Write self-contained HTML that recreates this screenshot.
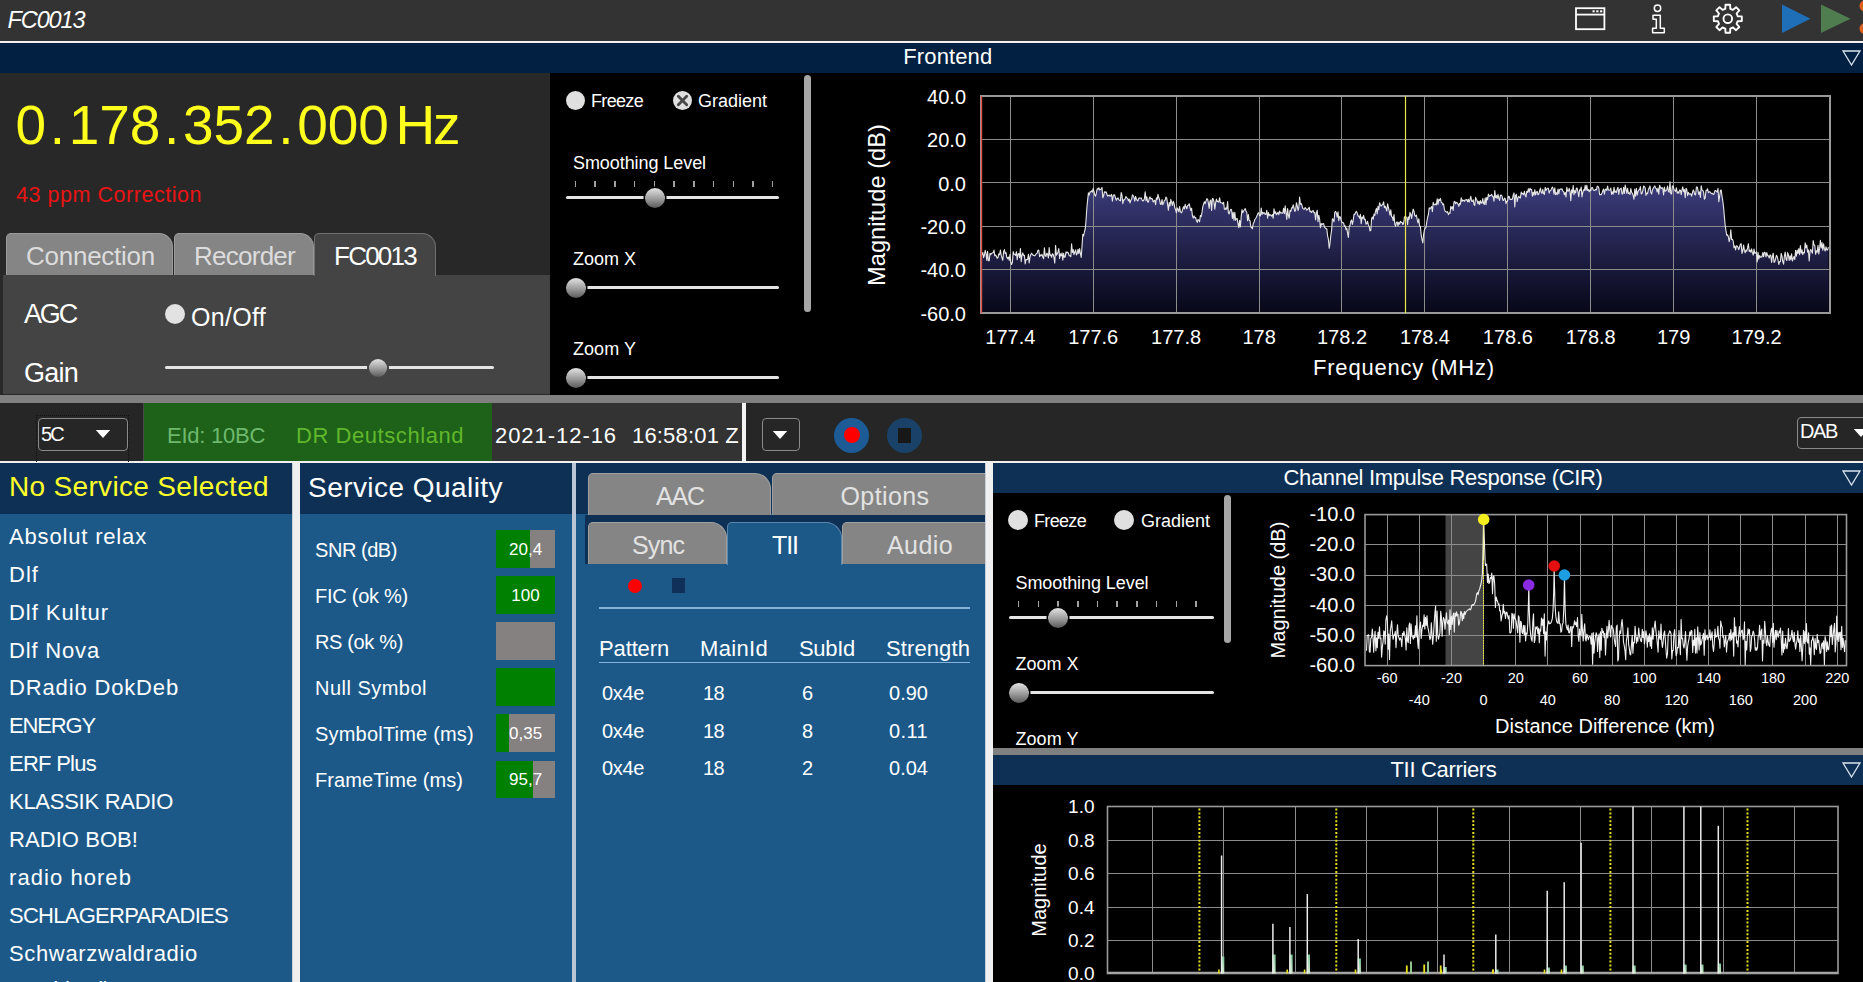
<!DOCTYPE html>
<html><head><meta charset="utf-8"><title>FC0013</title>
<style>
html,body{margin:0;padding:0;background:#000;}
body{width:1863px;height:982px;position:relative;overflow:hidden;font-family:"Liberation Sans",sans-serif;}
#r{position:absolute;left:0;top:0;width:1863px;height:982px;overflow:hidden;background:#000;}
#r div,#r span,#r svg{position:absolute;}
#r span{white-space:pre;}
#r i{font-style:normal;padding:0 3.6px;}
</style></head><body><div id="r">
<div style="left:0px;top:0px;width:1863px;height:41px;background:#333333;"></div>
<div style="left:0px;top:41px;width:1863px;height:2px;background:#f2f2f2;"></div>
<span style="left:7.5px;top:5.1px;font-size:23.5px;line-height:31px;color:#fff;letter-spacing:-1.10px;font-style:italic;">FC0013</span>
<div style="left:0px;top:43px;width:1863px;height:30px;background:#022041;"></div>
<span style="left:903.3px;top:42.4px;font-size:22px;line-height:29px;color:#fff;letter-spacing:0.12px;">Frontend</span>
<div style="left:0px;top:73px;width:550px;height:322px;background:#282828;"></div>
<span style="left:15.6px;top:89px;font-size:55px;line-height:72px;color:#ffff1e;">0<i>.</i>178<i>.</i>352<i>.</i>000</span>
<span style="left:395.5px;top:89.3px;font-size:55px;line-height:72px;color:#ffff1e;letter-spacing:-2.11px;">Hz</span>
<span style="left:16.0px;top:180.5px;font-size:21.5px;line-height:28px;color:#e81414;letter-spacing:0.54px;">43 ppm Correction</span>
<div style="left:6px;top:233px;width:167px;height:42px;background:#858585;border:1px solid #9a9a9a;border-bottom:none;box-sizing:border-box;border-radius:5px 14px 0 0;"></div>
<div style="left:174px;top:233px;width:140px;height:42px;background:#858585;border:1px solid #9a9a9a;border-bottom:none;box-sizing:border-box;border-radius:5px 14px 0 0;"></div>
<div style="left:3px;top:275px;width:547px;height:119px;background:#444444;"></div>
<div style="left:314px;top:233px;width:122px;height:43px;background:#444444;border:1px solid #707070;border-bottom:none;box-sizing:border-box;border-radius:5px 14px 0 0;"></div>
<span style="left:26.0px;top:239.3px;font-size:26px;line-height:34px;color:#dcdcdc;letter-spacing:-0.25px;">Connection</span>
<span style="left:194.0px;top:239.3px;font-size:26px;line-height:34px;color:#dcdcdc;letter-spacing:-0.74px;">Recorder</span>
<span style="left:334.0px;top:239.3px;font-size:26px;line-height:34px;color:#fff;letter-spacing:-1.75px;">FC0013</span>
<span style="left:24.0px;top:296.8px;font-size:27px;line-height:35px;color:#fff;letter-spacing:-2.17px;">AGC</span>
<span style="left:24.0px;top:356.3px;font-size:27px;line-height:35px;color:#fff;letter-spacing:-0.76px;">Gain</span>
<div style="left:165px;top:304px;width:20px;height:20px;border-radius:50%;background:#e2e2e2;"></div>
<span style="left:191.0px;top:301.3px;font-size:25px;line-height:32px;color:#fff;letter-spacing:0.30px;">On/Off</span>
<div style="left:165px;top:365.5px;width:329px;height:3px;background:#e4e4e4;border-radius:2px;"></div>
<div style="left:368.5px;top:358.5px;width:18px;height:18px;border-radius:50%;background:linear-gradient(180deg,#e2e2e2 0%,#c6c6c6 22%,#9a9a9a 55%,#5a5a5a 100%);box-shadow:0 0 0 2px #444;"></div>
<div style="left:0px;top:395px;width:1863px;height:8px;background:#808080;"></div>
<div style="left:566.0px;top:91.0px;width:19px;height:19px;border-radius:50%;background:#e0e0e0;"></div>
<span style="left:591.0px;top:90.2px;font-size:18px;line-height:23px;color:#fff;letter-spacing:-0.67px;">Freeze</span>
<div style="left:672.5px;top:91.0px;width:19px;height:19px;border-radius:50%;background:#e0e0e0;"></div>
<svg style="left:672.5px;top:91.0px" width="19" height="19" viewBox="0 0 20 20"><path d="M5.6 5.6 L14.4 14.4 M14.4 5.6 L5.6 14.4" stroke="#484848" stroke-width="3" stroke-linecap="round" fill="none"/></svg>
<span style="left:698.0px;top:90.2px;font-size:18px;line-height:23px;color:#fff;">Gradient</span>
<span style="left:573.0px;top:151.7px;font-size:18px;line-height:23px;color:#fff;letter-spacing:-0.07px;">Smoothing Level</span>
<div style="left:574.75px;top:181.3px;width:1.5px;height:5.699999999999989px;background:#a2a2a2;"></div>
<div style="left:594.47px;top:181.3px;width:1.5px;height:5.699999999999989px;background:#a2a2a2;"></div>
<div style="left:614.19px;top:181.3px;width:1.5px;height:5.699999999999989px;background:#a2a2a2;"></div>
<div style="left:633.91px;top:181.3px;width:1.5px;height:5.699999999999989px;background:#a2a2a2;"></div>
<div style="left:653.63px;top:181.3px;width:1.5px;height:5.699999999999989px;background:#a2a2a2;"></div>
<div style="left:673.35px;top:181.3px;width:1.5px;height:5.699999999999989px;background:#a2a2a2;"></div>
<div style="left:693.07px;top:181.3px;width:1.5px;height:5.699999999999989px;background:#a2a2a2;"></div>
<div style="left:712.79px;top:181.3px;width:1.5px;height:5.699999999999989px;background:#a2a2a2;"></div>
<div style="left:732.51px;top:181.3px;width:1.5px;height:5.699999999999989px;background:#a2a2a2;"></div>
<div style="left:752.23px;top:181.3px;width:1.5px;height:5.699999999999989px;background:#a2a2a2;"></div>
<div style="left:771.95px;top:181.3px;width:1.5px;height:5.699999999999989px;background:#a2a2a2;"></div>
<div style="left:566px;top:195.5px;width:213px;height:3px;background:#e4e4e4;border-radius:2px;"></div>
<div style="left:644.5px;top:187.5px;width:20px;height:20px;border-radius:50%;background:linear-gradient(180deg,#e2e2e2 0%,#c6c6c6 22%,#9a9a9a 55%,#5a5a5a 100%);box-shadow:0 0 0 1.5px #000;"></div>
<span style="left:573.0px;top:247.7px;font-size:18px;line-height:23px;color:#fff;">Zoom X</span>
<div style="left:566px;top:286.0px;width:213px;height:3px;background:#e4e4e4;border-radius:2px;"></div>
<div style="left:566.1px;top:278.0px;width:20px;height:20px;border-radius:50%;background:linear-gradient(180deg,#e2e2e2 0%,#c6c6c6 22%,#9a9a9a 55%,#5a5a5a 100%);box-shadow:0 0 0 1.5px #000;"></div>
<span style="left:573.0px;top:337.7px;font-size:18px;line-height:23px;color:#fff;letter-spacing:0.05px;">Zoom Y</span>
<div style="left:566px;top:376.0px;width:213px;height:3px;background:#e4e4e4;border-radius:2px;"></div>
<div style="left:566.1px;top:368.0px;width:20px;height:20px;border-radius:50%;background:linear-gradient(180deg,#e2e2e2 0%,#c6c6c6 22%,#9a9a9a 55%,#5a5a5a 100%);box-shadow:0 0 0 1.5px #000;"></div>
<div style="left:804px;top:75px;width:7px;height:237px;border-radius:4px;background:#a6a6a6;"></div>
<svg style="left:0;top:72px" width="1863" height="322" viewBox="0 72 1863 322"><defs><linearGradient id="sg" gradientUnits="userSpaceOnUse" x1="0" y1="96" x2="0" y2="313"><stop offset="0" stop-color="#5c5cb4"/><stop offset="0.43" stop-color="#3a3a78"/><stop offset="1" stop-color="#070718"/></linearGradient></defs><rect x="981" y="96" width="849" height="217" fill="#000"/><polygon points="982,313 982.0,255.1 982.8,252.3 983.6,257.6 984.4,255.0 985.2,250.4 986.0,253.4 986.8,260.5 987.6,251.2 988.4,260.6 989.2,260.8 990.0,253.3 990.8,254.6 991.6,253.3 992.4,253.0 993.2,252.5 994.0,250.1 994.8,255.9 995.6,255.0 996.4,256.3 997.2,258.2 998.0,257.7 998.8,253.8 999.6,254.6 1000.4,250.0 1001.2,255.2 1002.0,257.9 1002.8,260.3 1003.6,251.8 1004.4,249.6 1005.2,253.6 1006.0,252.7 1006.8,257.3 1007.6,258.6 1008.4,257.0 1009.2,260.5 1010.0,254.2 1010.8,262.2 1011.6,264.5 1012.4,262.3 1013.2,251.6 1014.0,254.3 1014.8,254.4 1015.6,255.3 1016.4,251.7 1017.2,259.8 1018.0,253.9 1018.8,253.5 1019.6,257.7 1020.4,248.5 1021.2,261.7 1022.0,255.2 1022.8,252.9 1023.6,255.6 1024.4,255.3 1025.2,264.0 1026.0,259.4 1026.8,259.8 1027.6,259.4 1028.4,254.3 1029.2,263.0 1030.0,257.0 1030.8,254.5 1031.6,253.2 1032.4,254.4 1033.2,255.4 1034.0,255.4 1034.8,255.9 1035.6,254.7 1036.4,253.6 1037.2,253.0 1038.0,250.1 1038.8,250.2 1039.6,256.7 1040.4,255.0 1041.2,255.7 1042.0,254.3 1042.8,257.1 1043.6,258.8 1044.4,247.7 1045.2,255.9 1046.0,256.4 1046.8,253.2 1047.6,254.2 1048.4,258.0 1049.2,247.5 1050.0,255.4 1050.8,254.8 1051.6,257.3 1052.4,253.7 1053.2,254.4 1054.0,257.8 1054.8,263.1 1055.6,245.3 1056.4,255.1 1057.2,254.0 1058.0,251.9 1058.8,248.6 1059.6,258.4 1060.4,253.8 1061.2,255.7 1062.0,252.9 1062.8,260.1 1063.6,253.3 1064.4,257.3 1065.2,257.0 1066.0,251.7 1066.8,253.0 1067.6,252.2 1068.4,253.1 1069.2,255.8 1070.0,255.7 1070.8,256.6 1071.6,243.8 1072.4,252.5 1073.2,249.6 1074.0,254.6 1074.8,252.2 1075.6,249.9 1076.4,254.9 1077.2,253.7 1078.0,249.2 1078.8,253.7 1079.6,248.5 1080.4,253.7 1081.2,257.5 1082.0,246.4 1082.8,234.2 1083.6,236.0 1084.4,232.0 1085.2,229.0 1086.0,220.7 1086.8,208.5 1087.6,200.4 1088.4,192.9 1089.2,195.1 1090.0,191.9 1090.8,191.9 1091.6,190.8 1092.4,192.1 1093.2,188.3 1094.0,191.3 1094.8,195.1 1095.6,196.2 1096.4,192.9 1097.2,188.7 1098.0,189.1 1098.8,187.8 1099.6,190.0 1100.4,189.6 1101.2,188.8 1102.0,187.4 1102.8,197.8 1103.6,195.8 1104.4,191.8 1105.2,192.4 1106.0,191.8 1106.8,193.8 1107.6,196.2 1108.4,195.5 1109.2,195.0 1110.0,196.3 1110.8,195.6 1111.6,194.4 1112.4,201.1 1113.2,196.1 1114.0,194.7 1114.8,195.3 1115.6,198.3 1116.4,200.3 1117.2,198.5 1118.0,197.9 1118.8,199.6 1119.6,200.3 1120.4,200.9 1121.2,192.5 1122.0,195.3 1122.8,203.6 1123.6,199.9 1124.4,200.0 1125.2,198.5 1126.0,196.5 1126.8,197.9 1127.6,198.4 1128.4,200.9 1129.2,199.0 1130.0,203.0 1130.8,200.4 1131.6,199.3 1132.4,194.8 1133.2,195.6 1134.0,197.4 1134.8,201.1 1135.6,196.3 1136.4,199.1 1137.2,200.6 1138.0,200.9 1138.8,198.1 1139.6,198.1 1140.4,198.3 1141.2,197.9 1142.0,200.0 1142.8,200.9 1143.6,200.5 1144.4,198.6 1145.2,191.9 1146.0,200.7 1146.8,196.7 1147.6,202.0 1148.4,202.2 1149.2,198.5 1150.0,196.9 1150.8,199.0 1151.6,198.5 1152.4,199.0 1153.2,202.0 1154.0,200.9 1154.8,200.3 1155.6,204.6 1156.4,197.7 1157.2,199.4 1158.0,194.3 1158.8,197.8 1159.6,199.8 1160.4,204.2 1161.2,204.4 1162.0,199.6 1162.8,204.7 1163.6,203.0 1164.4,200.4 1165.2,200.1 1166.0,197.0 1166.8,198.3 1167.6,204.6 1168.4,210.2 1169.2,202.5 1170.0,206.0 1170.8,199.4 1171.6,202.4 1172.4,205.4 1173.2,201.3 1174.0,203.3 1174.8,207.6 1175.6,209.7 1176.4,212.8 1177.2,207.9 1178.0,209.3 1178.8,211.8 1179.6,206.5 1180.4,211.5 1181.2,212.8 1182.0,211.8 1182.8,208.8 1183.6,206.7 1184.4,208.9 1185.2,204.4 1186.0,206.8 1186.8,208.8 1187.6,205.7 1188.4,205.2 1189.2,203.8 1190.0,207.3 1190.8,210.5 1191.6,208.3 1192.4,215.7 1193.2,218.2 1194.0,215.8 1194.8,217.7 1195.6,217.4 1196.4,220.5 1197.2,222.4 1198.0,219.5 1198.8,220.3 1199.6,221.8 1200.4,215.3 1201.2,216.7 1202.0,212.5 1202.8,206.6 1203.6,204.1 1204.4,201.8 1205.2,203.7 1206.0,201.1 1206.8,198.8 1207.6,199.0 1208.4,203.1 1209.2,208.4 1210.0,201.1 1210.8,200.0 1211.6,210.4 1212.4,198.6 1213.2,198.8 1214.0,201.9 1214.8,209.1 1215.6,203.1 1216.4,199.0 1217.2,201.6 1218.0,201.3 1218.8,202.1 1219.6,197.7 1220.4,202.7 1221.2,202.8 1222.0,202.8 1222.8,203.9 1223.6,202.2 1224.4,209.2 1225.2,209.4 1226.0,207.8 1226.8,209.2 1227.6,201.6 1228.4,212.9 1229.2,213.9 1230.0,210.9 1230.8,209.2 1231.6,209.9 1232.4,218.4 1233.2,212.4 1234.0,220.3 1234.8,212.3 1235.6,220.1 1236.4,218.8 1237.2,218.5 1238.0,223.4 1238.8,227.6 1239.6,220.2 1240.4,226.9 1241.2,216.6 1242.0,209.6 1242.8,212.6 1243.6,210.9 1244.4,210.0 1245.2,208.5 1246.0,211.0 1246.8,212.5 1247.6,220.7 1248.4,214.6 1249.2,220.5 1250.0,220.5 1250.8,227.0 1251.6,227.5 1252.4,228.8 1253.2,223.7 1254.0,222.3 1254.8,219.5 1255.6,218.6 1256.4,217.2 1257.2,215.2 1258.0,213.1 1258.8,212.6 1259.6,215.6 1260.4,216.0 1261.2,208.1 1262.0,214.5 1262.8,212.3 1263.6,213.4 1264.4,212.8 1265.2,214.4 1266.0,214.2 1266.8,210.3 1267.6,218.1 1268.4,212.5 1269.2,215.6 1270.0,214.6 1270.8,215.2 1271.6,216.1 1272.4,214.4 1273.2,218.3 1274.0,208.8 1274.8,213.5 1275.6,211.7 1276.4,214.8 1277.2,213.6 1278.0,212.4 1278.8,214.7 1279.6,211.0 1280.4,213.0 1281.2,212.7 1282.0,213.0 1282.8,213.2 1283.6,208.4 1284.4,213.6 1285.2,205.8 1286.0,212.8 1286.8,219.4 1287.6,208.6 1288.4,215.3 1289.2,218.3 1290.0,210.4 1290.8,211.3 1291.6,207.8 1292.4,208.0 1293.2,204.8 1294.0,208.0 1294.8,211.5 1295.6,210.1 1296.4,202.7 1297.2,205.6 1298.0,210.5 1298.8,207.7 1299.6,197.0 1300.4,204.3 1301.2,203.5 1302.0,205.8 1302.8,208.4 1303.6,209.0 1304.4,209.3 1305.2,207.6 1306.0,208.6 1306.8,210.2 1307.6,209.3 1308.4,208.7 1309.2,207.2 1310.0,211.8 1310.8,211.2 1311.6,212.5 1312.4,211.1 1313.2,210.5 1314.0,212.9 1314.8,212.5 1315.6,220.0 1316.4,213.2 1317.2,210.2 1318.0,221.8 1318.8,215.2 1319.6,219.0 1320.4,227.6 1321.2,223.6 1322.0,224.6 1322.8,223.7 1323.6,223.6 1324.4,226.9 1325.2,227.9 1326.0,228.7 1326.8,228.9 1327.6,235.8 1328.4,239.4 1329.2,248.2 1330.0,243.4 1330.8,235.5 1331.6,230.1 1332.4,218.7 1333.2,219.6 1334.0,221.7 1334.8,212.3 1335.6,211.5 1336.4,213.1 1337.2,217.2 1338.0,211.8 1338.8,220.7 1339.6,216.5 1340.4,217.3 1341.2,220.3 1342.0,222.6 1342.8,222.5 1343.6,222.9 1344.4,226.4 1345.2,225.8 1346.0,229.7 1346.8,228.1 1347.6,233.4 1348.4,237.5 1349.2,226.7 1350.0,225.4 1350.8,221.3 1351.6,219.9 1352.4,224.4 1353.2,220.4 1354.0,214.2 1354.8,214.5 1355.6,212.3 1356.4,211.4 1357.2,212.8 1358.0,215.9 1358.8,216.1 1359.6,218.2 1360.4,214.3 1361.2,223.8 1362.0,217.0 1362.8,218.6 1363.6,215.4 1364.4,219.7 1365.2,219.2 1366.0,224.1 1366.8,223.5 1367.6,221.3 1368.4,225.1 1369.2,226.5 1370.0,230.9 1370.8,230.4 1371.6,218.8 1372.4,216.9 1373.2,219.3 1374.0,214.0 1374.8,215.4 1375.6,211.2 1376.4,208.3 1377.2,213.9 1378.0,206.3 1378.8,209.6 1379.6,202.7 1380.4,204.8 1381.2,206.1 1382.0,205.0 1382.8,204.5 1383.6,201.8 1384.4,207.7 1385.2,206.2 1386.0,208.3 1386.8,211.0 1387.6,203.7 1388.4,207.5 1389.2,210.8 1390.0,215.2 1390.8,209.9 1391.6,216.7 1392.4,217.1 1393.2,220.7 1394.0,214.5 1394.8,224.4 1395.6,226.3 1396.4,222.2 1397.2,221.9 1398.0,225.9 1398.8,222.4 1399.6,224.1 1400.4,221.2 1401.2,222.5 1402.0,222.2 1402.8,224.6 1403.6,223.3 1404.4,217.4 1405.2,216.2 1406.0,217.0 1406.8,217.3 1407.6,224.8 1408.4,216.9 1409.2,219.2 1410.0,212.4 1410.8,214.4 1411.6,218.4 1412.4,213.2 1413.2,209.1 1414.0,211.2 1414.8,215.7 1415.6,216.2 1416.4,215.2 1417.2,219.4 1418.0,222.9 1418.8,218.8 1419.6,226.2 1420.4,226.4 1421.2,235.2 1422.0,239.3 1422.8,242.9 1423.6,234.7 1424.4,229.9 1425.2,228.4 1426.0,227.4 1426.8,221.7 1427.6,217.5 1428.4,214.5 1429.2,207.8 1430.0,208.9 1430.8,207.7 1431.6,206.5 1432.4,211.7 1433.2,202.3 1434.0,204.7 1434.8,204.8 1435.6,203.9 1436.4,204.9 1437.2,198.9 1438.0,204.5 1438.8,199.3 1439.6,200.6 1440.4,198.4 1441.2,202.2 1442.0,202.6 1442.8,204.7 1443.6,203.9 1444.4,209.4 1445.2,211.2 1446.0,211.7 1446.8,212.4 1447.6,211.7 1448.4,214.6 1449.2,213.1 1450.0,213.3 1450.8,206.3 1451.6,208.8 1452.4,206.7 1453.2,210.4 1454.0,201.8 1454.8,201.4 1455.6,203.7 1456.4,202.4 1457.2,202.7 1458.0,204.1 1458.8,206.4 1459.6,203.3 1460.4,204.3 1461.2,197.7 1462.0,201.4 1462.8,200.1 1463.6,200.4 1464.4,201.3 1465.2,199.7 1466.0,200.0 1466.8,199.6 1467.6,201.8 1468.4,199.2 1469.2,202.1 1470.0,199.4 1470.8,196.3 1471.6,201.2 1472.4,201.4 1473.2,199.8 1474.0,204.5 1474.8,205.3 1475.6,197.4 1476.4,199.2 1477.2,200.8 1478.0,203.8 1478.8,201.2 1479.6,204.5 1480.4,200.6 1481.2,203.0 1482.0,203.2 1482.8,198.6 1483.6,203.7 1484.4,204.3 1485.2,197.8 1486.0,204.7 1486.8,197.4 1487.6,199.7 1488.4,194.0 1489.2,196.4 1490.0,195.5 1490.8,195.5 1491.6,194.3 1492.4,196.2 1493.2,196.8 1494.0,201.3 1494.8,190.6 1495.6,197.7 1496.4,195.6 1497.2,198.5 1498.0,194.3 1498.8,198.2 1499.6,200.4 1500.4,195.3 1501.2,195.1 1502.0,195.8 1502.8,200.0 1503.6,200.5 1504.4,198.1 1505.2,198.6 1506.0,203.6 1506.8,201.1 1507.6,201.2 1508.4,196.3 1509.2,196.6 1510.0,199.4 1510.8,199.2 1511.6,199.4 1512.4,199.0 1513.2,195.2 1514.0,192.9 1514.8,207.0 1515.6,195.4 1516.4,194.3 1517.2,201.6 1518.0,198.0 1518.8,196.2 1519.6,197.6 1520.4,198.0 1521.2,192.0 1522.0,194.1 1522.8,193.3 1523.6,194.7 1524.4,191.3 1525.2,195.2 1526.0,196.9 1526.8,191.2 1527.6,192.4 1528.4,188.7 1529.2,192.1 1530.0,188.2 1530.8,189.7 1531.6,189.5 1532.4,196.3 1533.2,192.2 1534.0,195.1 1534.8,189.7 1535.6,194.9 1536.4,192.2 1537.2,191.4 1538.0,194.8 1538.8,194.0 1539.6,191.0 1540.4,188.1 1541.2,192.3 1542.0,193.4 1542.8,189.4 1543.6,193.7 1544.4,194.4 1545.2,187.4 1546.0,190.4 1546.8,188.9 1547.6,188.2 1548.4,188.3 1549.2,193.2 1550.0,190.7 1550.8,190.4 1551.6,188.5 1552.4,187.0 1553.2,188.9 1554.0,194.1 1554.8,187.9 1555.6,194.6 1556.4,192.8 1557.2,194.7 1558.0,189.0 1558.8,193.8 1559.6,189.4 1560.4,189.0 1561.2,189.4 1562.0,188.8 1562.8,191.1 1563.6,191.4 1564.4,194.8 1565.2,192.5 1566.0,196.9 1566.8,187.4 1567.6,191.2 1568.4,191.1 1569.2,188.3 1570.0,191.5 1570.8,200.8 1571.6,189.7 1572.4,193.0 1573.2,185.5 1574.0,194.6 1574.8,190.6 1575.6,192.9 1576.4,188.1 1577.2,188.3 1578.0,192.0 1578.8,196.8 1579.6,189.7 1580.4,190.4 1581.2,187.1 1582.0,196.9 1582.8,192.5 1583.6,189.7 1584.4,190.3 1585.2,185.4 1586.0,190.4 1586.8,185.4 1587.6,190.4 1588.4,189.6 1589.2,191.7 1590.0,189.7 1590.8,190.7 1591.6,187.7 1592.4,187.5 1593.2,189.7 1594.0,190.5 1594.8,190.4 1595.6,189.4 1596.4,189.9 1597.2,186.2 1598.0,186.4 1598.8,187.9 1599.6,194.6 1600.4,194.6 1601.2,194.8 1602.0,193.0 1602.8,190.7 1603.6,189.1 1604.4,194.1 1605.2,189.6 1606.0,189.0 1606.8,190.5 1607.6,186.1 1608.4,190.0 1609.2,190.2 1610.0,189.9 1610.8,188.1 1611.6,194.4 1612.4,191.8 1613.2,194.1 1614.0,187.2 1614.8,192.4 1615.6,191.1 1616.4,192.6 1617.2,189.0 1618.0,187.2 1618.8,194.4 1619.6,189.5 1620.4,189.1 1621.2,188.2 1622.0,193.9 1622.8,194.0 1623.6,187.4 1624.4,193.5 1625.2,185.0 1626.0,189.0 1626.8,193.5 1627.6,188.4 1628.4,193.5 1629.2,192.9 1630.0,194.4 1630.8,188.6 1631.6,192.3 1632.4,193.4 1633.2,195.6 1634.0,199.3 1634.8,189.1 1635.6,196.2 1636.4,188.2 1637.2,195.0 1638.0,191.7 1638.8,190.0 1639.6,189.5 1640.4,186.6 1641.2,194.0 1642.0,193.3 1642.8,190.8 1643.6,186.1 1644.4,186.4 1645.2,187.9 1646.0,195.4 1646.8,193.0 1647.6,193.7 1648.4,189.4 1649.2,188.1 1650.0,185.9 1650.8,192.3 1651.6,194.1 1652.4,190.2 1653.2,188.3 1654.0,187.0 1654.8,185.9 1655.6,188.1 1656.4,188.6 1657.2,192.0 1658.0,188.1 1658.8,194.2 1659.6,185.2 1660.4,187.3 1661.2,188.6 1662.0,187.6 1662.8,188.1 1663.6,195.0 1664.4,187.1 1665.2,191.3 1666.0,190.8 1666.8,189.5 1667.6,186.1 1668.4,191.1 1669.2,192.3 1670.0,181.9 1670.8,193.7 1671.6,194.0 1672.4,185.9 1673.2,186.3 1674.0,189.6 1674.8,190.3 1675.6,191.4 1676.4,187.7 1677.2,193.2 1678.0,191.8 1678.8,193.3 1679.6,190.0 1680.4,190.2 1681.2,194.7 1682.0,189.6 1682.8,186.9 1683.6,191.7 1684.4,189.5 1685.2,197.6 1686.0,188.2 1686.8,189.7 1687.6,195.6 1688.4,192.4 1689.2,194.1 1690.0,194.1 1690.8,193.7 1691.6,196.2 1692.4,193.1 1693.2,189.9 1694.0,191.3 1694.8,194.6 1695.6,194.9 1696.4,187.1 1697.2,187.0 1698.0,190.3 1698.8,194.4 1699.6,191.8 1700.4,197.5 1701.2,185.7 1702.0,190.1 1702.8,190.6 1703.6,192.1 1704.4,199.2 1705.2,197.9 1706.0,190.3 1706.8,190.4 1707.6,188.8 1708.4,192.7 1709.2,191.9 1710.0,191.7 1710.8,193.0 1711.6,193.7 1712.4,193.3 1713.2,194.5 1714.0,194.0 1714.8,191.0 1715.6,190.3 1716.4,191.4 1717.2,192.2 1718.0,188.3 1718.8,201.7 1719.6,196.7 1720.4,190.5 1721.2,190.0 1722.0,196.1 1722.8,200.8 1723.6,207.6 1724.4,216.9 1725.2,225.8 1726.0,230.9 1726.8,235.4 1727.6,234.8 1728.4,237.0 1729.2,241.6 1730.0,238.2 1730.8,229.9 1731.6,239.4 1732.4,239.3 1733.2,241.1 1734.0,247.6 1734.8,245.9 1735.6,250.0 1736.4,245.9 1737.2,246.0 1738.0,247.5 1738.8,249.7 1739.6,247.0 1740.4,244.1 1741.2,243.9 1742.0,253.4 1742.8,250.9 1743.6,245.1 1744.4,250.2 1745.2,252.8 1746.0,250.0 1746.8,251.1 1747.6,247.7 1748.4,243.7 1749.2,251.4 1750.0,250.2 1750.8,252.2 1751.6,248.9 1752.4,252.9 1753.2,255.1 1754.0,249.0 1754.8,253.4 1755.6,253.0 1756.4,251.8 1757.2,262.0 1758.0,252.2 1758.8,259.1 1759.6,255.6 1760.4,257.2 1761.2,256.8 1762.0,257.0 1762.8,252.5 1763.6,256.6 1764.4,252.3 1765.2,252.8 1766.0,256.9 1766.8,252.6 1767.6,255.6 1768.4,255.8 1769.2,258.1 1770.0,255.0 1770.8,255.3 1771.6,262.5 1772.4,256.7 1773.2,253.2 1774.0,262.1 1774.8,261.9 1775.6,258.7 1776.4,255.4 1777.2,256.6 1778.0,260.0 1778.8,264.5 1779.6,261.6 1780.4,261.6 1781.2,253.4 1782.0,256.5 1782.8,261.8 1783.6,264.2 1784.4,256.0 1785.2,252.1 1786.0,259.2 1786.8,260.6 1787.6,252.6 1788.4,254.8 1789.2,260.4 1790.0,255.8 1790.8,259.9 1791.6,253.7 1792.4,261.0 1793.2,258.4 1794.0,256.5 1794.8,259.6 1795.6,250.4 1796.4,256.2 1797.2,250.1 1798.0,253.5 1798.8,248.6 1799.6,254.6 1800.4,245.6 1801.2,253.3 1802.0,249.9 1802.8,254.7 1803.6,252.2 1804.4,252.8 1805.2,242.9 1806.0,247.8 1806.8,245.1 1807.6,252.3 1808.4,249.9 1809.2,260.9 1810.0,251.2 1810.8,249.4 1811.6,251.3 1812.4,253.2 1813.2,240.5 1814.0,244.8 1814.8,245.5 1815.6,254.3 1816.4,250.9 1817.2,252.2 1818.0,245.4 1818.8,253.9 1819.6,248.4 1820.4,240.2 1821.2,247.9 1822.0,242.5 1822.8,250.3 1823.6,243.8 1824.4,249.2 1825.2,251.0 1826.0,246.8 1826.8,249.9 1827.6,250.0 1828.4,247.1 1829,313" fill="url(#sg)" /><line x1="981" y1="96.5" x2="1830" y2="96.5" stroke="#8c8c8c" stroke-width="1"/><line x1="981" y1="139.5" x2="1830" y2="139.5" stroke="#8c8c8c" stroke-width="1"/><line x1="981" y1="182.5" x2="1830" y2="182.5" stroke="#8c8c8c" stroke-width="1"/><line x1="981" y1="226.5" x2="1830" y2="226.5" stroke="#8c8c8c" stroke-width="1"/><line x1="981" y1="269.5" x2="1830" y2="269.5" stroke="#8c8c8c" stroke-width="1"/><line x1="981" y1="313.5" x2="1830" y2="313.5" stroke="#8c8c8c" stroke-width="1"/><line x1="1010.5" y1="96" x2="1010.5" y2="313" stroke="#8c8c8c" stroke-width="1"/><line x1="1093.5" y1="96" x2="1093.5" y2="313" stroke="#8c8c8c" stroke-width="1"/><line x1="1176.5" y1="96" x2="1176.5" y2="313" stroke="#8c8c8c" stroke-width="1"/><line x1="1259.5" y1="96" x2="1259.5" y2="313" stroke="#8c8c8c" stroke-width="1"/><line x1="1341.5" y1="96" x2="1341.5" y2="313" stroke="#8c8c8c" stroke-width="1"/><line x1="1424.5" y1="96" x2="1424.5" y2="313" stroke="#8c8c8c" stroke-width="1"/><line x1="1507.5" y1="96" x2="1507.5" y2="313" stroke="#8c8c8c" stroke-width="1"/><line x1="1590.5" y1="96" x2="1590.5" y2="313" stroke="#8c8c8c" stroke-width="1"/><line x1="1673.5" y1="96" x2="1673.5" y2="313" stroke="#8c8c8c" stroke-width="1"/><line x1="1756.5" y1="96" x2="1756.5" y2="313" stroke="#8c8c8c" stroke-width="1"/><rect x="981" y="96" width="849" height="217" fill="none" stroke="#9a9a9a" stroke-width="2"/><polyline points="982.0,255.1 982.8,252.3 983.6,257.6 984.4,255.0 985.2,250.4 986.0,253.4 986.8,260.5 987.6,251.2 988.4,260.6 989.2,260.8 990.0,253.3 990.8,254.6 991.6,253.3 992.4,253.0 993.2,252.5 994.0,250.1 994.8,255.9 995.6,255.0 996.4,256.3 997.2,258.2 998.0,257.7 998.8,253.8 999.6,254.6 1000.4,250.0 1001.2,255.2 1002.0,257.9 1002.8,260.3 1003.6,251.8 1004.4,249.6 1005.2,253.6 1006.0,252.7 1006.8,257.3 1007.6,258.6 1008.4,257.0 1009.2,260.5 1010.0,254.2 1010.8,262.2 1011.6,264.5 1012.4,262.3 1013.2,251.6 1014.0,254.3 1014.8,254.4 1015.6,255.3 1016.4,251.7 1017.2,259.8 1018.0,253.9 1018.8,253.5 1019.6,257.7 1020.4,248.5 1021.2,261.7 1022.0,255.2 1022.8,252.9 1023.6,255.6 1024.4,255.3 1025.2,264.0 1026.0,259.4 1026.8,259.8 1027.6,259.4 1028.4,254.3 1029.2,263.0 1030.0,257.0 1030.8,254.5 1031.6,253.2 1032.4,254.4 1033.2,255.4 1034.0,255.4 1034.8,255.9 1035.6,254.7 1036.4,253.6 1037.2,253.0 1038.0,250.1 1038.8,250.2 1039.6,256.7 1040.4,255.0 1041.2,255.7 1042.0,254.3 1042.8,257.1 1043.6,258.8 1044.4,247.7 1045.2,255.9 1046.0,256.4 1046.8,253.2 1047.6,254.2 1048.4,258.0 1049.2,247.5 1050.0,255.4 1050.8,254.8 1051.6,257.3 1052.4,253.7 1053.2,254.4 1054.0,257.8 1054.8,263.1 1055.6,245.3 1056.4,255.1 1057.2,254.0 1058.0,251.9 1058.8,248.6 1059.6,258.4 1060.4,253.8 1061.2,255.7 1062.0,252.9 1062.8,260.1 1063.6,253.3 1064.4,257.3 1065.2,257.0 1066.0,251.7 1066.8,253.0 1067.6,252.2 1068.4,253.1 1069.2,255.8 1070.0,255.7 1070.8,256.6 1071.6,243.8 1072.4,252.5 1073.2,249.6 1074.0,254.6 1074.8,252.2 1075.6,249.9 1076.4,254.9 1077.2,253.7 1078.0,249.2 1078.8,253.7 1079.6,248.5 1080.4,253.7 1081.2,257.5 1082.0,246.4 1082.8,234.2 1083.6,236.0 1084.4,232.0 1085.2,229.0 1086.0,220.7 1086.8,208.5 1087.6,200.4 1088.4,192.9 1089.2,195.1 1090.0,191.9 1090.8,191.9 1091.6,190.8 1092.4,192.1 1093.2,188.3 1094.0,191.3 1094.8,195.1 1095.6,196.2 1096.4,192.9 1097.2,188.7 1098.0,189.1 1098.8,187.8 1099.6,190.0 1100.4,189.6 1101.2,188.8 1102.0,187.4 1102.8,197.8 1103.6,195.8 1104.4,191.8 1105.2,192.4 1106.0,191.8 1106.8,193.8 1107.6,196.2 1108.4,195.5 1109.2,195.0 1110.0,196.3 1110.8,195.6 1111.6,194.4 1112.4,201.1 1113.2,196.1 1114.0,194.7 1114.8,195.3 1115.6,198.3 1116.4,200.3 1117.2,198.5 1118.0,197.9 1118.8,199.6 1119.6,200.3 1120.4,200.9 1121.2,192.5 1122.0,195.3 1122.8,203.6 1123.6,199.9 1124.4,200.0 1125.2,198.5 1126.0,196.5 1126.8,197.9 1127.6,198.4 1128.4,200.9 1129.2,199.0 1130.0,203.0 1130.8,200.4 1131.6,199.3 1132.4,194.8 1133.2,195.6 1134.0,197.4 1134.8,201.1 1135.6,196.3 1136.4,199.1 1137.2,200.6 1138.0,200.9 1138.8,198.1 1139.6,198.1 1140.4,198.3 1141.2,197.9 1142.0,200.0 1142.8,200.9 1143.6,200.5 1144.4,198.6 1145.2,191.9 1146.0,200.7 1146.8,196.7 1147.6,202.0 1148.4,202.2 1149.2,198.5 1150.0,196.9 1150.8,199.0 1151.6,198.5 1152.4,199.0 1153.2,202.0 1154.0,200.9 1154.8,200.3 1155.6,204.6 1156.4,197.7 1157.2,199.4 1158.0,194.3 1158.8,197.8 1159.6,199.8 1160.4,204.2 1161.2,204.4 1162.0,199.6 1162.8,204.7 1163.6,203.0 1164.4,200.4 1165.2,200.1 1166.0,197.0 1166.8,198.3 1167.6,204.6 1168.4,210.2 1169.2,202.5 1170.0,206.0 1170.8,199.4 1171.6,202.4 1172.4,205.4 1173.2,201.3 1174.0,203.3 1174.8,207.6 1175.6,209.7 1176.4,212.8 1177.2,207.9 1178.0,209.3 1178.8,211.8 1179.6,206.5 1180.4,211.5 1181.2,212.8 1182.0,211.8 1182.8,208.8 1183.6,206.7 1184.4,208.9 1185.2,204.4 1186.0,206.8 1186.8,208.8 1187.6,205.7 1188.4,205.2 1189.2,203.8 1190.0,207.3 1190.8,210.5 1191.6,208.3 1192.4,215.7 1193.2,218.2 1194.0,215.8 1194.8,217.7 1195.6,217.4 1196.4,220.5 1197.2,222.4 1198.0,219.5 1198.8,220.3 1199.6,221.8 1200.4,215.3 1201.2,216.7 1202.0,212.5 1202.8,206.6 1203.6,204.1 1204.4,201.8 1205.2,203.7 1206.0,201.1 1206.8,198.8 1207.6,199.0 1208.4,203.1 1209.2,208.4 1210.0,201.1 1210.8,200.0 1211.6,210.4 1212.4,198.6 1213.2,198.8 1214.0,201.9 1214.8,209.1 1215.6,203.1 1216.4,199.0 1217.2,201.6 1218.0,201.3 1218.8,202.1 1219.6,197.7 1220.4,202.7 1221.2,202.8 1222.0,202.8 1222.8,203.9 1223.6,202.2 1224.4,209.2 1225.2,209.4 1226.0,207.8 1226.8,209.2 1227.6,201.6 1228.4,212.9 1229.2,213.9 1230.0,210.9 1230.8,209.2 1231.6,209.9 1232.4,218.4 1233.2,212.4 1234.0,220.3 1234.8,212.3 1235.6,220.1 1236.4,218.8 1237.2,218.5 1238.0,223.4 1238.8,227.6 1239.6,220.2 1240.4,226.9 1241.2,216.6 1242.0,209.6 1242.8,212.6 1243.6,210.9 1244.4,210.0 1245.2,208.5 1246.0,211.0 1246.8,212.5 1247.6,220.7 1248.4,214.6 1249.2,220.5 1250.0,220.5 1250.8,227.0 1251.6,227.5 1252.4,228.8 1253.2,223.7 1254.0,222.3 1254.8,219.5 1255.6,218.6 1256.4,217.2 1257.2,215.2 1258.0,213.1 1258.8,212.6 1259.6,215.6 1260.4,216.0 1261.2,208.1 1262.0,214.5 1262.8,212.3 1263.6,213.4 1264.4,212.8 1265.2,214.4 1266.0,214.2 1266.8,210.3 1267.6,218.1 1268.4,212.5 1269.2,215.6 1270.0,214.6 1270.8,215.2 1271.6,216.1 1272.4,214.4 1273.2,218.3 1274.0,208.8 1274.8,213.5 1275.6,211.7 1276.4,214.8 1277.2,213.6 1278.0,212.4 1278.8,214.7 1279.6,211.0 1280.4,213.0 1281.2,212.7 1282.0,213.0 1282.8,213.2 1283.6,208.4 1284.4,213.6 1285.2,205.8 1286.0,212.8 1286.8,219.4 1287.6,208.6 1288.4,215.3 1289.2,218.3 1290.0,210.4 1290.8,211.3 1291.6,207.8 1292.4,208.0 1293.2,204.8 1294.0,208.0 1294.8,211.5 1295.6,210.1 1296.4,202.7 1297.2,205.6 1298.0,210.5 1298.8,207.7 1299.6,197.0 1300.4,204.3 1301.2,203.5 1302.0,205.8 1302.8,208.4 1303.6,209.0 1304.4,209.3 1305.2,207.6 1306.0,208.6 1306.8,210.2 1307.6,209.3 1308.4,208.7 1309.2,207.2 1310.0,211.8 1310.8,211.2 1311.6,212.5 1312.4,211.1 1313.2,210.5 1314.0,212.9 1314.8,212.5 1315.6,220.0 1316.4,213.2 1317.2,210.2 1318.0,221.8 1318.8,215.2 1319.6,219.0 1320.4,227.6 1321.2,223.6 1322.0,224.6 1322.8,223.7 1323.6,223.6 1324.4,226.9 1325.2,227.9 1326.0,228.7 1326.8,228.9 1327.6,235.8 1328.4,239.4 1329.2,248.2 1330.0,243.4 1330.8,235.5 1331.6,230.1 1332.4,218.7 1333.2,219.6 1334.0,221.7 1334.8,212.3 1335.6,211.5 1336.4,213.1 1337.2,217.2 1338.0,211.8 1338.8,220.7 1339.6,216.5 1340.4,217.3 1341.2,220.3 1342.0,222.6 1342.8,222.5 1343.6,222.9 1344.4,226.4 1345.2,225.8 1346.0,229.7 1346.8,228.1 1347.6,233.4 1348.4,237.5 1349.2,226.7 1350.0,225.4 1350.8,221.3 1351.6,219.9 1352.4,224.4 1353.2,220.4 1354.0,214.2 1354.8,214.5 1355.6,212.3 1356.4,211.4 1357.2,212.8 1358.0,215.9 1358.8,216.1 1359.6,218.2 1360.4,214.3 1361.2,223.8 1362.0,217.0 1362.8,218.6 1363.6,215.4 1364.4,219.7 1365.2,219.2 1366.0,224.1 1366.8,223.5 1367.6,221.3 1368.4,225.1 1369.2,226.5 1370.0,230.9 1370.8,230.4 1371.6,218.8 1372.4,216.9 1373.2,219.3 1374.0,214.0 1374.8,215.4 1375.6,211.2 1376.4,208.3 1377.2,213.9 1378.0,206.3 1378.8,209.6 1379.6,202.7 1380.4,204.8 1381.2,206.1 1382.0,205.0 1382.8,204.5 1383.6,201.8 1384.4,207.7 1385.2,206.2 1386.0,208.3 1386.8,211.0 1387.6,203.7 1388.4,207.5 1389.2,210.8 1390.0,215.2 1390.8,209.9 1391.6,216.7 1392.4,217.1 1393.2,220.7 1394.0,214.5 1394.8,224.4 1395.6,226.3 1396.4,222.2 1397.2,221.9 1398.0,225.9 1398.8,222.4 1399.6,224.1 1400.4,221.2 1401.2,222.5 1402.0,222.2 1402.8,224.6 1403.6,223.3 1404.4,217.4 1405.2,216.2 1406.0,217.0 1406.8,217.3 1407.6,224.8 1408.4,216.9 1409.2,219.2 1410.0,212.4 1410.8,214.4 1411.6,218.4 1412.4,213.2 1413.2,209.1 1414.0,211.2 1414.8,215.7 1415.6,216.2 1416.4,215.2 1417.2,219.4 1418.0,222.9 1418.8,218.8 1419.6,226.2 1420.4,226.4 1421.2,235.2 1422.0,239.3 1422.8,242.9 1423.6,234.7 1424.4,229.9 1425.2,228.4 1426.0,227.4 1426.8,221.7 1427.6,217.5 1428.4,214.5 1429.2,207.8 1430.0,208.9 1430.8,207.7 1431.6,206.5 1432.4,211.7 1433.2,202.3 1434.0,204.7 1434.8,204.8 1435.6,203.9 1436.4,204.9 1437.2,198.9 1438.0,204.5 1438.8,199.3 1439.6,200.6 1440.4,198.4 1441.2,202.2 1442.0,202.6 1442.8,204.7 1443.6,203.9 1444.4,209.4 1445.2,211.2 1446.0,211.7 1446.8,212.4 1447.6,211.7 1448.4,214.6 1449.2,213.1 1450.0,213.3 1450.8,206.3 1451.6,208.8 1452.4,206.7 1453.2,210.4 1454.0,201.8 1454.8,201.4 1455.6,203.7 1456.4,202.4 1457.2,202.7 1458.0,204.1 1458.8,206.4 1459.6,203.3 1460.4,204.3 1461.2,197.7 1462.0,201.4 1462.8,200.1 1463.6,200.4 1464.4,201.3 1465.2,199.7 1466.0,200.0 1466.8,199.6 1467.6,201.8 1468.4,199.2 1469.2,202.1 1470.0,199.4 1470.8,196.3 1471.6,201.2 1472.4,201.4 1473.2,199.8 1474.0,204.5 1474.8,205.3 1475.6,197.4 1476.4,199.2 1477.2,200.8 1478.0,203.8 1478.8,201.2 1479.6,204.5 1480.4,200.6 1481.2,203.0 1482.0,203.2 1482.8,198.6 1483.6,203.7 1484.4,204.3 1485.2,197.8 1486.0,204.7 1486.8,197.4 1487.6,199.7 1488.4,194.0 1489.2,196.4 1490.0,195.5 1490.8,195.5 1491.6,194.3 1492.4,196.2 1493.2,196.8 1494.0,201.3 1494.8,190.6 1495.6,197.7 1496.4,195.6 1497.2,198.5 1498.0,194.3 1498.8,198.2 1499.6,200.4 1500.4,195.3 1501.2,195.1 1502.0,195.8 1502.8,200.0 1503.6,200.5 1504.4,198.1 1505.2,198.6 1506.0,203.6 1506.8,201.1 1507.6,201.2 1508.4,196.3 1509.2,196.6 1510.0,199.4 1510.8,199.2 1511.6,199.4 1512.4,199.0 1513.2,195.2 1514.0,192.9 1514.8,207.0 1515.6,195.4 1516.4,194.3 1517.2,201.6 1518.0,198.0 1518.8,196.2 1519.6,197.6 1520.4,198.0 1521.2,192.0 1522.0,194.1 1522.8,193.3 1523.6,194.7 1524.4,191.3 1525.2,195.2 1526.0,196.9 1526.8,191.2 1527.6,192.4 1528.4,188.7 1529.2,192.1 1530.0,188.2 1530.8,189.7 1531.6,189.5 1532.4,196.3 1533.2,192.2 1534.0,195.1 1534.8,189.7 1535.6,194.9 1536.4,192.2 1537.2,191.4 1538.0,194.8 1538.8,194.0 1539.6,191.0 1540.4,188.1 1541.2,192.3 1542.0,193.4 1542.8,189.4 1543.6,193.7 1544.4,194.4 1545.2,187.4 1546.0,190.4 1546.8,188.9 1547.6,188.2 1548.4,188.3 1549.2,193.2 1550.0,190.7 1550.8,190.4 1551.6,188.5 1552.4,187.0 1553.2,188.9 1554.0,194.1 1554.8,187.9 1555.6,194.6 1556.4,192.8 1557.2,194.7 1558.0,189.0 1558.8,193.8 1559.6,189.4 1560.4,189.0 1561.2,189.4 1562.0,188.8 1562.8,191.1 1563.6,191.4 1564.4,194.8 1565.2,192.5 1566.0,196.9 1566.8,187.4 1567.6,191.2 1568.4,191.1 1569.2,188.3 1570.0,191.5 1570.8,200.8 1571.6,189.7 1572.4,193.0 1573.2,185.5 1574.0,194.6 1574.8,190.6 1575.6,192.9 1576.4,188.1 1577.2,188.3 1578.0,192.0 1578.8,196.8 1579.6,189.7 1580.4,190.4 1581.2,187.1 1582.0,196.9 1582.8,192.5 1583.6,189.7 1584.4,190.3 1585.2,185.4 1586.0,190.4 1586.8,185.4 1587.6,190.4 1588.4,189.6 1589.2,191.7 1590.0,189.7 1590.8,190.7 1591.6,187.7 1592.4,187.5 1593.2,189.7 1594.0,190.5 1594.8,190.4 1595.6,189.4 1596.4,189.9 1597.2,186.2 1598.0,186.4 1598.8,187.9 1599.6,194.6 1600.4,194.6 1601.2,194.8 1602.0,193.0 1602.8,190.7 1603.6,189.1 1604.4,194.1 1605.2,189.6 1606.0,189.0 1606.8,190.5 1607.6,186.1 1608.4,190.0 1609.2,190.2 1610.0,189.9 1610.8,188.1 1611.6,194.4 1612.4,191.8 1613.2,194.1 1614.0,187.2 1614.8,192.4 1615.6,191.1 1616.4,192.6 1617.2,189.0 1618.0,187.2 1618.8,194.4 1619.6,189.5 1620.4,189.1 1621.2,188.2 1622.0,193.9 1622.8,194.0 1623.6,187.4 1624.4,193.5 1625.2,185.0 1626.0,189.0 1626.8,193.5 1627.6,188.4 1628.4,193.5 1629.2,192.9 1630.0,194.4 1630.8,188.6 1631.6,192.3 1632.4,193.4 1633.2,195.6 1634.0,199.3 1634.8,189.1 1635.6,196.2 1636.4,188.2 1637.2,195.0 1638.0,191.7 1638.8,190.0 1639.6,189.5 1640.4,186.6 1641.2,194.0 1642.0,193.3 1642.8,190.8 1643.6,186.1 1644.4,186.4 1645.2,187.9 1646.0,195.4 1646.8,193.0 1647.6,193.7 1648.4,189.4 1649.2,188.1 1650.0,185.9 1650.8,192.3 1651.6,194.1 1652.4,190.2 1653.2,188.3 1654.0,187.0 1654.8,185.9 1655.6,188.1 1656.4,188.6 1657.2,192.0 1658.0,188.1 1658.8,194.2 1659.6,185.2 1660.4,187.3 1661.2,188.6 1662.0,187.6 1662.8,188.1 1663.6,195.0 1664.4,187.1 1665.2,191.3 1666.0,190.8 1666.8,189.5 1667.6,186.1 1668.4,191.1 1669.2,192.3 1670.0,181.9 1670.8,193.7 1671.6,194.0 1672.4,185.9 1673.2,186.3 1674.0,189.6 1674.8,190.3 1675.6,191.4 1676.4,187.7 1677.2,193.2 1678.0,191.8 1678.8,193.3 1679.6,190.0 1680.4,190.2 1681.2,194.7 1682.0,189.6 1682.8,186.9 1683.6,191.7 1684.4,189.5 1685.2,197.6 1686.0,188.2 1686.8,189.7 1687.6,195.6 1688.4,192.4 1689.2,194.1 1690.0,194.1 1690.8,193.7 1691.6,196.2 1692.4,193.1 1693.2,189.9 1694.0,191.3 1694.8,194.6 1695.6,194.9 1696.4,187.1 1697.2,187.0 1698.0,190.3 1698.8,194.4 1699.6,191.8 1700.4,197.5 1701.2,185.7 1702.0,190.1 1702.8,190.6 1703.6,192.1 1704.4,199.2 1705.2,197.9 1706.0,190.3 1706.8,190.4 1707.6,188.8 1708.4,192.7 1709.2,191.9 1710.0,191.7 1710.8,193.0 1711.6,193.7 1712.4,193.3 1713.2,194.5 1714.0,194.0 1714.8,191.0 1715.6,190.3 1716.4,191.4 1717.2,192.2 1718.0,188.3 1718.8,201.7 1719.6,196.7 1720.4,190.5 1721.2,190.0 1722.0,196.1 1722.8,200.8 1723.6,207.6 1724.4,216.9 1725.2,225.8 1726.0,230.9 1726.8,235.4 1727.6,234.8 1728.4,237.0 1729.2,241.6 1730.0,238.2 1730.8,229.9 1731.6,239.4 1732.4,239.3 1733.2,241.1 1734.0,247.6 1734.8,245.9 1735.6,250.0 1736.4,245.9 1737.2,246.0 1738.0,247.5 1738.8,249.7 1739.6,247.0 1740.4,244.1 1741.2,243.9 1742.0,253.4 1742.8,250.9 1743.6,245.1 1744.4,250.2 1745.2,252.8 1746.0,250.0 1746.8,251.1 1747.6,247.7 1748.4,243.7 1749.2,251.4 1750.0,250.2 1750.8,252.2 1751.6,248.9 1752.4,252.9 1753.2,255.1 1754.0,249.0 1754.8,253.4 1755.6,253.0 1756.4,251.8 1757.2,262.0 1758.0,252.2 1758.8,259.1 1759.6,255.6 1760.4,257.2 1761.2,256.8 1762.0,257.0 1762.8,252.5 1763.6,256.6 1764.4,252.3 1765.2,252.8 1766.0,256.9 1766.8,252.6 1767.6,255.6 1768.4,255.8 1769.2,258.1 1770.0,255.0 1770.8,255.3 1771.6,262.5 1772.4,256.7 1773.2,253.2 1774.0,262.1 1774.8,261.9 1775.6,258.7 1776.4,255.4 1777.2,256.6 1778.0,260.0 1778.8,264.5 1779.6,261.6 1780.4,261.6 1781.2,253.4 1782.0,256.5 1782.8,261.8 1783.6,264.2 1784.4,256.0 1785.2,252.1 1786.0,259.2 1786.8,260.6 1787.6,252.6 1788.4,254.8 1789.2,260.4 1790.0,255.8 1790.8,259.9 1791.6,253.7 1792.4,261.0 1793.2,258.4 1794.0,256.5 1794.8,259.6 1795.6,250.4 1796.4,256.2 1797.2,250.1 1798.0,253.5 1798.8,248.6 1799.6,254.6 1800.4,245.6 1801.2,253.3 1802.0,249.9 1802.8,254.7 1803.6,252.2 1804.4,252.8 1805.2,242.9 1806.0,247.8 1806.8,245.1 1807.6,252.3 1808.4,249.9 1809.2,260.9 1810.0,251.2 1810.8,249.4 1811.6,251.3 1812.4,253.2 1813.2,240.5 1814.0,244.8 1814.8,245.5 1815.6,254.3 1816.4,250.9 1817.2,252.2 1818.0,245.4 1818.8,253.9 1819.6,248.4 1820.4,240.2 1821.2,247.9 1822.0,242.5 1822.8,250.3 1823.6,243.8 1824.4,249.2 1825.2,251.0 1826.0,246.8 1826.8,249.9 1827.6,250.0 1828.4,247.1" fill="none" stroke="#e6e6e6" stroke-width="1.1" stroke-linejoin="round"/><line x1="981.5" y1="96" x2="981.5" y2="313" stroke="#e05040" stroke-width="1.4"/><line x1="1405.5" y1="96" x2="1405.5" y2="313" stroke="#e8e84a" stroke-width="1.2"/></svg>
<span style="left:927.1px;top:83.7px;font-size:20px;line-height:26px;color:#fff;">40.0</span>
<span style="left:927.1px;top:127.1px;font-size:20px;line-height:26px;color:#fff;">20.0</span>
<span style="left:938.2px;top:170.5px;font-size:20px;line-height:26px;color:#fff;">0.0</span>
<span style="left:920.4px;top:213.9px;font-size:20px;line-height:26px;color:#fff;">-20.0</span>
<span style="left:920.4px;top:257.3px;font-size:20px;line-height:26px;color:#fff;">-40.0</span>
<span style="left:920.4px;top:300.7px;font-size:20px;line-height:26px;color:#fff;">-60.0</span>
<span style="left:985.3px;top:324.2px;font-size:20px;line-height:26px;color:#fff;">177.4</span>
<span style="left:1068.2px;top:324.2px;font-size:20px;line-height:26px;color:#fff;">177.6</span>
<span style="left:1151.1px;top:324.2px;font-size:20px;line-height:26px;color:#fff;">177.8</span>
<span style="left:1242.4px;top:324.2px;font-size:20px;line-height:26px;color:#fff;">178</span>
<span style="left:1317.0px;top:324.2px;font-size:20px;line-height:26px;color:#fff;">178.2</span>
<span style="left:1399.9px;top:324.2px;font-size:20px;line-height:26px;color:#fff;">178.4</span>
<span style="left:1482.8px;top:324.2px;font-size:20px;line-height:26px;color:#fff;">178.6</span>
<span style="left:1565.7px;top:324.2px;font-size:20px;line-height:26px;color:#fff;">178.8</span>
<span style="left:1657.0px;top:324.2px;font-size:20px;line-height:26px;color:#fff;">179</span>
<span style="left:1731.6px;top:324.2px;font-size:20px;line-height:26px;color:#fff;">179.2</span>
<span style="left:1313.0px;top:353.3px;font-size:22px;line-height:29px;color:#fff;letter-spacing:0.80px;">Frequency (MHz)</span>
<span style="left:877px;top:205px;font-size:23.7px;line-height:26px;color:#fff;transform:translate(-50%,-50%) rotate(-90deg);">Magnitude (dB)</span>
<div style="left:0px;top:403px;width:1863px;height:58px;background:#262626;"></div>
<div style="left:492px;top:403px;width:250px;height:58px;background:#333333;"></div>
<div style="left:143px;top:403px;width:349px;height:58px;background:#1d6218;"></div>
<div style="left:143px;top:403px;width:1px;height:58px;background:#4a4a4a;"></div>
<div style="left:741.8px;top:403px;width:4.6px;height:58px;background:#f4f4f4;"></div>
<div style="left:0px;top:461px;width:1863px;height:2px;background:#f0f0f0;"></div>
<div style="left:38px;top:418px;width:90px;height:33px;box-sizing:border-box;border:1px solid #8a8a8a;border-radius:4px;background:#262626;"></div>
<div style="left:36px;top:415px;width:93px;height:47px;box-sizing:border-box;border:1px dotted #111;border-bottom:none;"></div>
<span style="left:41.0px;top:421.2px;font-size:20px;line-height:26px;color:#fff;letter-spacing:-1.78px;">5C</span>
<svg style="left:95px;top:429px" width="16" height="10" viewBox="0 0 16 10"><path d="M0.8 1 L15.2 1 L8 9 Z" fill="#fff"/></svg>
<span style="left:167.0px;top:420.6px;font-size:22px;line-height:29px;color:#6fb96f;letter-spacing:-0.25px;">EId: 10BC</span>
<span style="left:296.0px;top:420.6px;font-size:22px;line-height:29px;color:#62b72c;letter-spacing:0.56px;">DR Deutschland</span>
<span style="left:495.0px;top:420.6px;font-size:22px;line-height:29px;color:#fff;letter-spacing:0.95px;">2021-12-16</span>
<span style="left:632.0px;top:420.6px;font-size:22px;line-height:29px;color:#fff;letter-spacing:0.18px;">16:58:01 Z</span>
<div style="left:762px;top:418px;width:38px;height:33px;box-sizing:border-box;border:1px solid #8a8a8a;border-radius:4px;background:#262626;"></div>
<svg style="left:772px;top:429.5px" width="16" height="10" viewBox="0 0 16 10"><path d="M0.8 1 L15.2 1 L8 9 Z" fill="#fff"/></svg>
<div style="left:834px;top:417.5px;width:35px;height:35px;border-radius:50%;background:#1c5b96;"></div>
<div style="left:843.5px;top:427px;width:16px;height:16px;border-radius:50%;background:#ff0000;"></div>
<div style="left:886.5px;top:417.5px;width:35px;height:35px;border-radius:50%;background:#1a4268;"></div>
<div style="left:898px;top:427.5px;width:13px;height:15px;background:#181818;"></div>
<div style="left:1797px;top:417px;width:80px;height:32px;box-sizing:border-box;border:1px solid #8a8a8a;border-radius:4px;background:#262626;"></div>
<span style="left:1800.0px;top:418.2px;font-size:20px;line-height:26px;color:#fff;letter-spacing:-1.38px;">DAB</span>
<svg style="left:1853px;top:427.5px" width="16" height="10" viewBox="0 0 16 10"><path d="M0.8 1 L15.2 1 L8 9 Z" fill="#fff"/></svg>
<div style="left:0px;top:463px;width:292px;height:51px;background:#0e3055;"></div>
<div style="left:0px;top:514px;width:292px;height:468px;background:#1c5989;"></div>
<span style="left:9.0px;top:469.0px;font-size:28px;line-height:36px;color:#ffff2a;letter-spacing:0.33px;">No Service Selected</span>
<span style="left:9.0px;top:521.8px;font-size:22px;line-height:29px;color:#fff;letter-spacing:0.83px;">Absolut relax</span>
<span style="left:9.0px;top:559.7px;font-size:22px;line-height:29px;color:#fff;letter-spacing:1.04px;">Dlf</span>
<span style="left:9.0px;top:597.6px;font-size:22px;line-height:29px;color:#fff;letter-spacing:0.95px;">Dlf Kultur</span>
<span style="left:9.0px;top:635.5px;font-size:22px;line-height:29px;color:#fff;letter-spacing:0.83px;">Dlf Nova</span>
<span style="left:9.0px;top:673.4px;font-size:22px;line-height:29px;color:#fff;letter-spacing:0.85px;">DRadio DokDeb</span>
<span style="left:9.0px;top:711.3px;font-size:22px;line-height:29px;color:#fff;letter-spacing:-1.15px;">ENERGY</span>
<span style="left:9.0px;top:749.2px;font-size:22px;line-height:29px;color:#fff;letter-spacing:-0.74px;">ERF Plus</span>
<span style="left:9.0px;top:787.1px;font-size:22px;line-height:29px;color:#fff;letter-spacing:-0.27px;">KLASSIK RADIO</span>
<span style="left:9.0px;top:825.0px;font-size:22px;line-height:29px;color:#fff;letter-spacing:0.06px;">RADIO BOB!</span>
<span style="left:9.0px;top:862.9px;font-size:22px;line-height:29px;color:#fff;letter-spacing:1.06px;">radio horeb</span>
<span style="left:9.0px;top:900.8px;font-size:22px;line-height:29px;color:#fff;letter-spacing:-0.73px;">SCHLAGERPARADIES</span>
<span style="left:9.0px;top:938.7px;font-size:22px;line-height:29px;color:#fff;letter-spacing:0.65px;">Schwarzwaldradio</span>
<span style="left:9.0px;top:974.6px;font-size:22px;line-height:29px;color:#fff;letter-spacing:-0.55px;">sunshine live</span>
<div style="left:292px;top:463px;width:8px;height:519px;background:#efefef;"></div>
<div style="left:292px;top:463px;width:1px;height:519px;background:#c9cfd8;"></div>
<div style="left:300px;top:463px;width:272px;height:51px;background:#0e3055;"></div>
<div style="left:300px;top:514px;width:272px;height:468px;background:#1c5989;"></div>
<span style="left:308.0px;top:469.8px;font-size:28px;line-height:36px;color:#fff;letter-spacing:0.45px;">Service Quality</span>
<span style="left:315.0px;top:536.9px;font-size:20px;line-height:26px;color:#fff;letter-spacing:-0.45px;">SNR (dB)</span>
<div style="left:496px;top:530.0px;width:59px;height:37.5px;background:#858181;"></div>
<div style="left:496px;top:530.0px;width:34px;height:37.5px;background:#008000;"></div>
<span style="left:509.0px;top:538.9px;font-size:17px;line-height:22px;color:#fff;">20,4</span>
<span style="left:315.0px;top:583.0px;font-size:20px;line-height:26px;color:#fff;letter-spacing:-0.26px;">FIC (ok %)</span>
<div style="left:496px;top:576.1px;width:59px;height:37.5px;background:#858181;"></div>
<div style="left:496px;top:576.1px;width:59px;height:37.5px;background:#008000;"></div>
<span style="left:511.3px;top:585.0px;font-size:17px;line-height:22px;color:#fff;">100</span>
<span style="left:315.0px;top:629.1px;font-size:20px;line-height:26px;color:#fff;letter-spacing:-0.35px;">RS (ok %)</span>
<div style="left:496px;top:622.2px;width:59px;height:37.5px;background:#858181;"></div>
<span style="left:315.0px;top:675.2px;font-size:20px;line-height:26px;color:#fff;letter-spacing:0.48px;">Null Symbol</span>
<div style="left:496px;top:668.3px;width:59px;height:37.5px;background:#858181;"></div>
<div style="left:496px;top:668.3px;width:59px;height:37.5px;background:#008000;"></div>
<span style="left:315.0px;top:721.3px;font-size:20px;line-height:26px;color:#fff;letter-spacing:0.20px;">SymbolTime (ms)</span>
<div style="left:496px;top:714.4px;width:59px;height:37.5px;background:#858181;"></div>
<div style="left:496px;top:714.4px;width:13px;height:37.5px;background:#008000;"></div>
<span style="left:509.0px;top:723.3px;font-size:17px;line-height:22px;color:#fff;">0,35</span>
<span style="left:315.0px;top:767.4px;font-size:20px;line-height:26px;color:#fff;letter-spacing:0.07px;">FrameTime (ms)</span>
<div style="left:496px;top:760.5px;width:59px;height:37.5px;background:#858181;"></div>
<div style="left:496px;top:760.5px;width:37px;height:37.5px;background:#008000;"></div>
<span style="left:509.0px;top:769.4px;font-size:17px;line-height:22px;color:#fff;">95,7</span>
<div style="left:572px;top:463px;width:4.4px;height:519px;background:#bac6d6;"></div>
<div style="left:576px;top:463px;width:409px;height:519px;background:#1c5989;"></div>
<div style="left:576px;top:463px;width:409px;height:51px;background:#0e3055;"></div>
<div style="left:585px;top:515px;width:400px;height:8px;background:#0e3055;"></div>
<div style="left:585px;top:515px;width:3px;height:49px;background:#0e3055;"></div>
<div style="left:588px;top:523px;width:397px;height:41px;background:#0e3055;"></div>
<div style="left:588px;top:473px;width:183px;height:42px;background:#858585;border:1px solid #a0a0a0;border-bottom:none;box-sizing:border-box;border-radius:5px 16px 0 0;"></div>
<div style="left:772px;top:473px;width:230px;height:42px;background:#858585;border:1px solid #a0a0a0;border-bottom:none;box-sizing:border-box;border-radius:5px 16px 0 0;"></div>
<div style="left:588px;top:522px;width:139px;height:42px;background:#858585;border:1px solid #a0a0a0;border-bottom:none;box-sizing:border-box;border-radius:5px 16px 0 0;"></div>
<div style="left:842px;top:522px;width:160px;height:42px;background:#858585;border:1px solid #a0a0a0;border-bottom:none;box-sizing:border-box;border-radius:5px 16px 0 0;"></div>
<div style="left:727px;top:522px;width:115px;height:43px;background:#1c5989;border:1px solid #5d86ad;border-bottom:none;box-sizing:border-box;border-radius:5px 16px 0 0;"></div>
<span style="left:656.0px;top:480.3px;font-size:25px;line-height:32px;color:#e2e2e2;letter-spacing:-1.13px;">AAC</span>
<span style="left:840.5px;top:480.3px;font-size:25px;line-height:32px;color:#e2e2e2;letter-spacing:0.41px;">Options</span>
<span style="left:632.0px;top:529.3px;font-size:25px;line-height:32px;color:#e2e2e2;letter-spacing:-0.89px;">Sync</span>
<span style="left:772.0px;top:529.3px;font-size:25px;line-height:32px;color:#fff;letter-spacing:-1.05px;">TII</span>
<span style="left:887.0px;top:529.3px;font-size:25px;line-height:32px;color:#e2e2e2;letter-spacing:0.41px;">Audio</span>
<div style="left:985px;top:463px;width:8px;height:519px;background:#f0f0f0;"></div>
<div style="left:985px;top:463px;width:1px;height:519px;background:#c9cfd8;"></div>
<div style="left:628px;top:578.5px;width:14px;height:14px;border-radius:50%;background:#ff0000;"></div>
<div style="left:672px;top:578px;width:13px;height:15px;background:#10305a;"></div>
<div style="left:599px;top:607px;width:371px;height:2px;background:#86b2da;"></div>
<span style="left:599.0px;top:634.3px;font-size:22px;line-height:29px;color:#fff;letter-spacing:-0.13px;">Pattern</span>
<span style="left:700.0px;top:634.3px;font-size:22px;line-height:29px;color:#fff;letter-spacing:0.33px;">MainId</span>
<span style="left:799.0px;top:634.3px;font-size:22px;line-height:29px;color:#fff;letter-spacing:-0.30px;">SubId</span>
<span style="left:886.0px;top:634.3px;font-size:22px;line-height:29px;color:#fff;letter-spacing:0.10px;">Strength</span>
<div style="left:599px;top:662px;width:371px;height:1px;background:#86b2da;"></div>
<span style="left:602.0px;top:680.2px;font-size:20px;line-height:26px;color:#fff;letter-spacing:-0.34px;">0x4e</span>
<span style="left:703.0px;top:680.2px;font-size:20px;line-height:26px;color:#fff;letter-spacing:-0.62px;">18</span>
<span style="left:802.0px;top:680.2px;font-size:20px;line-height:26px;color:#fff;">6</span>
<span style="left:889.0px;top:680.2px;font-size:20px;line-height:26px;color:#fff;letter-spacing:0.02px;">0.90</span>
<span style="left:602.0px;top:717.8px;font-size:20px;line-height:26px;color:#fff;letter-spacing:-0.34px;">0x4e</span>
<span style="left:703.0px;top:717.8px;font-size:20px;line-height:26px;color:#fff;letter-spacing:-0.62px;">18</span>
<span style="left:802.0px;top:717.8px;font-size:20px;line-height:26px;color:#fff;">8</span>
<span style="left:889.0px;top:717.8px;font-size:20px;line-height:26px;color:#fff;letter-spacing:0.39px;">0.11</span>
<span style="left:602.0px;top:755.4px;font-size:20px;line-height:26px;color:#fff;letter-spacing:-0.34px;">0x4e</span>
<span style="left:703.0px;top:755.4px;font-size:20px;line-height:26px;color:#fff;letter-spacing:-0.62px;">18</span>
<span style="left:802.0px;top:755.4px;font-size:20px;line-height:26px;color:#fff;">2</span>
<span style="left:889.0px;top:755.4px;font-size:20px;line-height:26px;color:#fff;letter-spacing:0.02px;">0.04</span>
<div style="left:993px;top:463px;width:870px;height:30px;background:#0e3055;"></div>
<div style="left:993px;top:493px;width:870px;height:255px;background:#000;"></div>
<span style="left:1283.5px;top:463.0px;font-size:22px;line-height:29px;color:#fff;letter-spacing:-0.33px;">Channel Impulse Response (CIR)</span>
<svg style="left:1842px;top:49.5px" width="19" height="16" viewBox="0 0 19 16"><path d="M1 1 L18 1 L9.5 15 Z" fill="none" stroke="#d8e4f0" stroke-width="1.3"/></svg>
<svg style="left:1842px;top:469.5px" width="19" height="16" viewBox="0 0 19 16"><path d="M1 1 L18 1 L9.5 15 Z" fill="none" stroke="#d8e4f0" stroke-width="1.3"/></svg>
<div style="left:1008.0px;top:510.0px;width:20px;height:20px;border-radius:50%;background:#e0e0e0;"></div>
<span style="left:1034.0px;top:509.7px;font-size:18px;line-height:23px;color:#fff;letter-spacing:-0.67px;">Freeze</span>
<div style="left:1114.3px;top:510.0px;width:20px;height:20px;border-radius:50%;background:#e0e0e0;"></div>
<span style="left:1141.0px;top:509.7px;font-size:18px;line-height:23px;color:#fff;">Gradient</span>
<span style="left:1015.5px;top:571.7px;font-size:18px;line-height:23px;color:#fff;letter-spacing:-0.07px;">Smoothing Level</span>
<div style="left:1017.85px;top:601.3px;width:1.5px;height:5.7000000000000455px;background:#a2a2a2;"></div>
<div style="left:1037.57px;top:601.3px;width:1.5px;height:5.7000000000000455px;background:#a2a2a2;"></div>
<div style="left:1057.29px;top:601.3px;width:1.5px;height:5.7000000000000455px;background:#a2a2a2;"></div>
<div style="left:1077.01px;top:601.3px;width:1.5px;height:5.7000000000000455px;background:#a2a2a2;"></div>
<div style="left:1096.73px;top:601.3px;width:1.5px;height:5.7000000000000455px;background:#a2a2a2;"></div>
<div style="left:1116.45px;top:601.3px;width:1.5px;height:5.7000000000000455px;background:#a2a2a2;"></div>
<div style="left:1136.17px;top:601.3px;width:1.5px;height:5.7000000000000455px;background:#a2a2a2;"></div>
<div style="left:1155.89px;top:601.3px;width:1.5px;height:5.7000000000000455px;background:#a2a2a2;"></div>
<div style="left:1175.61px;top:601.3px;width:1.5px;height:5.7000000000000455px;background:#a2a2a2;"></div>
<div style="left:1195.33px;top:601.3px;width:1.5px;height:5.7000000000000455px;background:#a2a2a2;"></div>
<div style="left:1009px;top:616.0px;width:205px;height:3px;background:#e4e4e4;border-radius:2px;"></div>
<div style="left:1047.5px;top:608.0px;width:20px;height:20px;border-radius:50%;background:linear-gradient(180deg,#e2e2e2 0%,#c6c6c6 22%,#9a9a9a 55%,#5a5a5a 100%);box-shadow:0 0 0 1.5px #000;"></div>
<span style="left:1015.5px;top:652.7px;font-size:18px;line-height:23px;color:#fff;">Zoom X</span>
<div style="left:1009px;top:690.5px;width:205px;height:3px;background:#e4e4e4;border-radius:2px;"></div>
<div style="left:1009.0px;top:682.5px;width:20px;height:20px;border-radius:50%;background:linear-gradient(180deg,#e2e2e2 0%,#c6c6c6 22%,#9a9a9a 55%,#5a5a5a 100%);box-shadow:0 0 0 1.5px #000;"></div>
<span style="left:1015.5px;top:727.7px;font-size:18px;line-height:23px;color:#fff;letter-spacing:0.05px;">Zoom Y</span>
<div style="left:1224px;top:495px;width:7px;height:148px;border-radius:4px;background:#a6a6a6;"></div>
<svg style="left:0;top:493px" width="1863" height="255" viewBox="0 493 1863 255"><rect x="1445.5" y="514.6" width="37.7" height="151.0" fill="#444444"/><line x1="1365" y1="514.5" x2="1846.5" y2="514.5" stroke="#8c8c8c" stroke-width="1"/><line x1="1365" y1="544.5" x2="1846.5" y2="544.5" stroke="#8c8c8c" stroke-width="1"/><line x1="1365" y1="575.5" x2="1846.5" y2="575.5" stroke="#8c8c8c" stroke-width="1"/><line x1="1365" y1="605.5" x2="1846.5" y2="605.5" stroke="#8c8c8c" stroke-width="1"/><line x1="1365" y1="635.5" x2="1846.5" y2="635.5" stroke="#8c8c8c" stroke-width="1"/><line x1="1365" y1="665.5" x2="1846.5" y2="665.5" stroke="#8c8c8c" stroke-width="1"/><line x1="1387.5" y1="514.6" x2="1387.5" y2="665.6" stroke="#8c8c8c" stroke-width="1"/><line x1="1419.5" y1="514.6" x2="1419.5" y2="665.6" stroke="#8c8c8c" stroke-width="1"/><line x1="1451.5" y1="514.6" x2="1451.5" y2="665.6" stroke="#8c8c8c" stroke-width="1"/><line x1="1483.5" y1="514.6" x2="1483.5" y2="665.6" stroke="#8c8c8c" stroke-width="1"/><line x1="1515.5" y1="514.6" x2="1515.5" y2="665.6" stroke="#8c8c8c" stroke-width="1"/><line x1="1547.5" y1="514.6" x2="1547.5" y2="665.6" stroke="#8c8c8c" stroke-width="1"/><line x1="1580.5" y1="514.6" x2="1580.5" y2="665.6" stroke="#8c8c8c" stroke-width="1"/><line x1="1612.5" y1="514.6" x2="1612.5" y2="665.6" stroke="#8c8c8c" stroke-width="1"/><line x1="1644.5" y1="514.6" x2="1644.5" y2="665.6" stroke="#8c8c8c" stroke-width="1"/><line x1="1676.5" y1="514.6" x2="1676.5" y2="665.6" stroke="#8c8c8c" stroke-width="1"/><line x1="1708.5" y1="514.6" x2="1708.5" y2="665.6" stroke="#8c8c8c" stroke-width="1"/><line x1="1740.5" y1="514.6" x2="1740.5" y2="665.6" stroke="#8c8c8c" stroke-width="1"/><line x1="1772.5" y1="514.6" x2="1772.5" y2="665.6" stroke="#8c8c8c" stroke-width="1"/><line x1="1805.5" y1="514.6" x2="1805.5" y2="665.6" stroke="#8c8c8c" stroke-width="1"/><line x1="1837.5" y1="514.6" x2="1837.5" y2="665.6" stroke="#8c8c8c" stroke-width="1"/><rect x="1365" y="514.6" width="481.5" height="151.0" fill="none" stroke="#9a9a9a" stroke-width="1.6"/><polyline points="1366.5,650.7 1367.2,636.1 1367.9,635.1 1368.7,634.9 1369.4,652.0 1370.1,652.2 1370.8,638.3 1371.5,637.8 1372.3,629.1 1373.0,637.1 1373.7,652.3 1374.4,638.8 1375.1,631.2 1375.9,650.7 1376.6,637.7 1377.3,647.7 1378.0,632.3 1378.7,638.4 1379.5,626.9 1380.2,638.7 1380.9,638.0 1381.6,657.2 1382.3,647.3 1383.1,641.6 1383.8,630.9 1384.5,631.6 1385.2,644.1 1385.9,620.0 1386.7,615.7 1387.4,621.6 1388.1,649.2 1388.8,634.1 1389.5,659.4 1390.3,630.7 1391.0,626.1 1391.7,620.9 1392.4,631.6 1393.1,639.3 1393.9,635.0 1394.6,635.4 1395.3,631.4 1396.0,647.6 1396.7,635.0 1397.5,624.9 1398.2,635.8 1398.9,637.7 1399.6,640.2 1400.3,637.9 1401.1,639.7 1401.8,646.6 1402.5,633.4 1403.2,635.5 1403.9,631.4 1404.7,634.8 1405.4,639.2 1406.1,649.9 1406.8,627.8 1407.5,640.9 1408.3,642.8 1409.0,625.7 1409.7,623.0 1410.4,643.5 1411.1,624.1 1411.9,636.3 1412.6,636.3 1413.3,639.2 1414.0,635.2 1414.7,637.8 1415.5,625.9 1416.2,637.0 1416.9,615.7 1417.6,641.1 1418.3,648.6 1419.1,630.8 1419.8,626.1 1420.5,622.1 1421.2,638.5 1421.9,630.1 1422.7,625.0 1423.4,626.4 1424.1,614.9 1424.8,629.0 1425.5,617.2 1426.3,625.5 1427.0,615.7 1427.7,626.7 1428.4,629.9 1429.1,633.9 1429.9,639.6 1430.6,638.0 1431.3,622.8 1432.0,633.5 1432.7,644.3 1433.5,635.0 1434.2,622.9 1434.9,612.9 1435.6,606.0 1436.3,641.3 1437.1,611.1 1437.8,635.5 1438.5,639.2 1439.2,635.9 1439.9,633.4 1440.7,611.3 1441.4,617.3 1442.1,636.2 1442.8,622.3 1443.5,617.5 1444.3,619.9 1445.0,629.3 1445.7,620.5 1446.4,612.7 1447.1,622.0 1447.9,623.9 1448.6,620.0 1449.3,634.5 1450.0,609.8 1450.7,629.5 1451.5,616.2 1452.2,624.4 1452.9,616.0 1453.6,613.1 1454.3,632.1 1455.1,613.1 1455.8,616.5 1456.5,611.9 1457.2,615.9 1457.9,614.3 1458.7,625.2 1459.4,623.5 1460.1,618.1 1460.8,611.4 1461.5,612.5 1462.3,620.7 1463.0,613.5 1463.7,618.6 1464.4,611.5 1465.1,614.5 1465.9,612.1 1466.6,611.2 1467.3,610.6 1468.0,609.9 1468.7,609.4 1469.5,608.8 1470.2,609.9 1470.9,609.1 1471.6,606.1 1472.3,604.6 1473.1,605.4 1473.8,604.4 1474.5,603.9 1475.2,601.9 1475.9,599.1 1476.7,593.9 1477.4,592.7 1478.1,594.6 1478.8,590.8 1479.5,589.7 1480.3,586.5 1481.0,584.0 1481.7,579.9 1482.4,574.0 1483.1,546.7 1483.6,519.1 1483.9,527.0 1484.6,547.5 1485.3,565.4 1486.0,564.1 1486.7,564.5 1487.5,582.5 1488.2,574.1 1488.9,583.5 1489.6,582.6 1490.3,577.5 1491.1,578.4 1491.8,573.0 1492.5,593.7 1493.2,577.1 1493.9,575.9 1494.7,584.3 1495.4,607.4 1496.1,597.0 1496.8,599.5 1497.5,601.1 1498.3,604.4 1499.0,603.8 1499.7,610.9 1500.4,610.5 1501.1,621.0 1501.9,615.8 1502.6,613.7 1503.3,604.2 1504.0,613.3 1504.7,611.4 1505.5,618.5 1506.2,612.4 1506.9,612.1 1507.6,615.7 1508.3,619.0 1509.1,615.5 1509.8,632.8 1510.5,633.0 1511.2,631.5 1511.9,613.2 1512.7,614.8 1513.4,628.2 1514.1,613.9 1514.8,618.5 1515.5,619.2 1516.3,622.2 1517.0,628.1 1517.7,632.9 1518.4,615.8 1519.1,617.2 1519.9,642.3 1520.6,621.3 1521.3,622.6 1522.0,632.6 1522.7,633.3 1523.5,625.3 1524.2,634.6 1524.9,625.5 1525.6,640.9 1526.3,633.1 1527.1,634.0 1527.8,623.5 1528.5,600.1 1528.8,585.3 1529.2,607.7 1529.9,626.9 1530.7,635.5 1531.4,639.4 1532.1,641.2 1532.8,622.0 1533.5,613.8 1534.3,642.5 1535.0,639.8 1535.7,627.1 1536.4,628.7 1537.1,626.5 1537.9,633.6 1538.6,628.0 1539.3,642.6 1540.0,629.3 1540.7,631.1 1541.5,618.1 1542.2,625.3 1542.9,619.0 1543.6,633.8 1544.3,613.7 1545.1,656.1 1545.8,631.9 1546.5,639.9 1547.2,627.7 1547.9,623.9 1548.7,621.0 1549.4,623.8 1550.1,623.6 1550.8,623.0 1551.5,621.7 1552.3,618.6 1553.0,610.9 1553.7,591.9 1554.2,566.5 1554.4,581.9 1555.1,606.8 1555.9,616.9 1556.6,621.1 1557.3,622.8 1558.0,623.4 1558.7,611.9 1559.5,623.8 1560.2,623.9 1560.9,632.3 1561.6,631.3 1562.3,624.7 1563.1,622.9 1563.8,608.3 1564.5,575.6 1564.5,578.6 1565.2,610.8 1565.9,623.9 1566.7,627.9 1567.4,629.9 1568.1,625.0 1568.8,632.7 1569.5,632.9 1570.3,628.2 1571.0,626.3 1571.7,646.5 1572.4,626.7 1573.1,628.2 1573.9,625.2 1574.6,620.7 1575.3,624.7 1576.0,622.6 1576.7,626.7 1577.5,617.6 1578.2,636.5 1578.9,641.5 1579.6,629.0 1580.3,634.7 1581.1,635.8 1581.8,614.3 1582.5,630.7 1583.2,640.9 1583.9,630.3 1584.7,623.8 1585.4,638.6 1586.1,641.0 1586.8,634.0 1587.5,636.1 1588.3,639.7 1589.0,637.1 1589.7,636.4 1590.4,636.8 1591.1,644.1 1591.9,633.2 1592.6,664.2 1593.3,632.5 1594.0,653.2 1594.7,643.2 1595.5,636.6 1596.2,632.7 1596.9,635.4 1597.6,651.4 1598.3,638.0 1599.1,633.9 1599.8,657.5 1600.5,631.8 1601.2,650.3 1601.9,628.2 1602.7,632.7 1603.4,631.2 1604.1,637.6 1604.8,633.3 1605.5,655.0 1606.3,637.8 1607.0,626.3 1607.7,637.9 1608.4,630.8 1609.1,620.3 1609.9,630.6 1610.6,636.9 1611.3,625.4 1612.0,627.9 1612.7,627.7 1613.5,630.5 1614.2,638.5 1614.9,642.8 1615.6,646.4 1616.3,627.5 1617.1,625.1 1617.8,661.0 1618.5,659.0 1619.2,639.2 1619.9,630.9 1620.7,633.4 1621.4,624.2 1622.1,619.6 1622.8,627.8 1623.5,642.0 1624.3,646.1 1625.0,650.8 1625.7,659.7 1626.4,640.4 1627.1,636.7 1627.9,627.9 1628.6,644.1 1629.3,648.1 1630.0,654.3 1630.7,654.9 1631.5,644.4 1632.2,635.3 1632.9,653.3 1633.6,642.2 1634.3,642.9 1635.1,626.4 1635.8,635.6 1636.5,643.1 1637.2,637.3 1637.9,641.3 1638.7,628.0 1639.4,635.4 1640.1,638.3 1640.8,640.8 1641.5,641.7 1642.3,629.2 1643.0,637.5 1643.7,631.5 1644.4,643.8 1645.1,639.5 1645.9,630.7 1646.6,635.4 1647.3,647.2 1648.0,636.3 1648.7,641.8 1649.5,633.7 1650.2,646.1 1650.9,636.9 1651.6,648.5 1652.3,627.7 1653.1,639.2 1653.8,629.5 1654.5,626.4 1655.2,621.0 1655.9,630.6 1656.7,637.5 1657.4,644.2 1658.1,652.1 1658.8,630.8 1659.5,637.0 1660.3,639.5 1661.0,624.0 1661.7,640.7 1662.4,647.5 1663.1,642.5 1663.9,633.3 1664.6,631.0 1665.3,639.7 1666.0,649.9 1666.7,658.1 1667.5,653.7 1668.2,634.6 1668.9,633.6 1669.6,630.9 1670.3,631.7 1671.1,634.0 1671.8,659.0 1672.5,650.6 1673.2,650.7 1673.9,634.1 1674.7,629.5 1675.4,646.0 1676.1,655.5 1676.8,653.6 1677.5,647.4 1678.3,647.7 1679.0,630.6 1679.7,644.8 1680.4,654.6 1681.1,619.6 1681.9,638.7 1682.6,638.3 1683.3,645.4 1684.0,648.0 1684.7,642.9 1685.5,631.5 1686.2,647.8 1686.9,660.2 1687.6,646.7 1688.3,642.1 1689.1,638.7 1689.8,631.9 1690.5,635.6 1691.2,630.3 1691.9,631.2 1692.7,652.4 1693.4,640.2 1694.1,645.5 1694.8,629.4 1695.5,653.0 1696.3,637.7 1697.0,653.0 1697.7,626.8 1698.4,637.8 1699.1,650.0 1699.9,632.6 1700.6,645.0 1701.3,643.3 1702.0,639.8 1702.7,637.0 1703.5,633.4 1704.2,655.3 1704.9,629.9 1705.6,639.9 1706.3,636.9 1707.1,635.0 1707.8,639.7 1708.5,637.3 1709.2,637.4 1709.9,629.8 1710.7,640.2 1711.4,635.5 1712.1,631.9 1712.8,646.6 1713.5,651.5 1714.3,643.1 1715.0,629.1 1715.7,637.2 1716.4,636.3 1717.1,636.5 1717.9,626.4 1718.6,638.5 1719.3,639.8 1720.0,648.1 1720.7,621.1 1721.5,625.8 1722.2,627.2 1722.9,637.2 1723.6,635.8 1724.3,647.0 1725.1,640.8 1725.8,635.4 1726.5,652.1 1727.2,642.9 1727.9,640.2 1728.7,638.5 1729.4,633.2 1730.1,640.9 1730.8,629.5 1731.5,639.8 1732.3,635.9 1733.0,632.6 1733.7,656.1 1734.4,617.7 1735.1,636.1 1735.9,626.9 1736.6,643.1 1737.3,640.9 1738.0,646.9 1738.7,634.8 1739.5,626.6 1740.2,636.6 1740.9,633.2 1741.6,630.8 1742.3,630.0 1743.1,639.7 1743.8,637.4 1744.5,621.9 1745.2,664.6 1745.9,641.3 1746.7,649.9 1747.4,636.0 1748.1,628.8 1748.8,634.0 1749.5,629.6 1750.3,651.5 1751.0,648.2 1751.7,636.1 1752.4,635.5 1753.1,631.0 1753.9,633.1 1754.6,639.7 1755.3,650.1 1756.0,647.6 1756.7,650.4 1757.5,647.7 1758.2,636.1 1758.9,636.0 1759.6,625.4 1760.3,639.7 1761.1,631.5 1761.8,629.1 1762.5,660.9 1763.2,640.2 1763.9,643.3 1764.7,621.3 1765.4,631.1 1766.1,642.9 1766.8,645.7 1767.5,635.7 1768.3,642.5 1769.0,645.3 1769.7,646.6 1770.4,635.4 1771.1,630.3 1771.9,628.1 1772.6,642.5 1773.3,623.3 1774.0,647.1 1774.7,637.6 1775.5,630.3 1776.2,639.8 1776.9,630.2 1777.6,635.3 1778.3,637.2 1779.1,631.0 1779.8,632.9 1780.5,628.0 1781.2,639.4 1781.9,655.0 1782.7,631.1 1783.4,652.4 1784.1,644.1 1784.8,648.9 1785.5,638.3 1786.3,646.2 1787.0,648.8 1787.7,643.0 1788.4,628.6 1789.1,641.5 1789.9,640.6 1790.6,638.8 1791.3,635.3 1792.0,630.2 1792.7,637.9 1793.5,641.8 1794.2,632.4 1794.9,643.5 1795.6,649.2 1796.3,643.9 1797.1,640.0 1797.8,630.9 1798.5,642.3 1799.2,638.7 1799.9,651.5 1800.7,635.8 1801.4,647.0 1802.1,660.8 1802.8,647.7 1803.5,630.4 1804.3,643.8 1805.0,631.5 1805.7,641.6 1806.4,623.6 1807.1,641.2 1807.9,643.1 1808.6,632.9 1809.3,654.1 1810.0,647.8 1810.7,664.6 1811.5,640.5 1812.2,640.1 1812.9,636.5 1813.6,641.4 1814.3,654.6 1815.1,638.6 1815.8,647.5 1816.5,649.5 1817.2,634.2 1817.9,642.6 1818.7,640.3 1819.4,647.0 1820.1,653.5 1820.8,652.6 1821.5,644.9 1822.3,642.8 1823.0,648.6 1823.7,640.8 1824.4,664.6 1825.1,636.6 1825.9,641.2 1826.6,651.5 1827.3,641.8 1828.0,649.2 1828.7,649.8 1829.5,642.4 1830.2,626.1 1830.9,636.7 1831.6,625.1 1832.3,644.5 1833.1,636.3 1833.8,629.1 1834.5,623.2 1835.2,652.0 1835.9,644.3 1836.7,616.0 1837.4,640.0 1838.1,632.3 1838.8,641.4 1839.5,632.7 1840.3,632.2 1841.0,649.7 1841.7,626.2 1842.4,647.5 1843.1,638.3 1843.9,646.3 1844.6,651.6 1845.3,640.3" fill="none" stroke="#f0f0f0" stroke-width="1.1" stroke-linejoin="round"/><line x1="1483.5" y1="520" x2="1483.5" y2="665.6" stroke="#f0ee30" stroke-width="1" stroke-dasharray="1.5,1"/><line x1="1483.5" y1="520" x2="1483.5" y2="560" stroke="#f4f2a0" stroke-width="1.2"/><circle cx="1483.7" cy="519.5" r="5.8" fill="#f4ef1c"/><circle cx="1528.7" cy="585" r="5.8" fill="#8a2be2"/><circle cx="1554.2" cy="566" r="5.8" fill="#e60f0f"/><circle cx="1564.4" cy="575" r="5.8" fill="#1e9ee2"/></svg>
<span style="left:1309.4px;top:501.0px;font-size:20px;line-height:26px;color:#fff;">-10.0</span>
<span style="left:1309.4px;top:531.2px;font-size:20px;line-height:26px;color:#fff;">-20.0</span>
<span style="left:1309.4px;top:561.4px;font-size:20px;line-height:26px;color:#fff;">-30.0</span>
<span style="left:1309.4px;top:591.6px;font-size:20px;line-height:26px;color:#fff;">-40.0</span>
<span style="left:1309.4px;top:621.8px;font-size:20px;line-height:26px;color:#fff;">-50.0</span>
<span style="left:1309.4px;top:652.0px;font-size:20px;line-height:26px;color:#fff;">-60.0</span>
<span style="left:1376.7px;top:669.2px;font-size:14.5px;line-height:19px;color:#fff;">-60</span>
<span style="left:1408.8px;top:690.7px;font-size:14.5px;line-height:19px;color:#fff;">-40</span>
<span style="left:1441.0px;top:669.2px;font-size:14.5px;line-height:19px;color:#fff;">-20</span>
<span style="left:1479.6px;top:690.7px;font-size:14.5px;line-height:19px;color:#fff;">0</span>
<span style="left:1507.7px;top:669.2px;font-size:14.5px;line-height:19px;color:#fff;">20</span>
<span style="left:1539.8px;top:690.7px;font-size:14.5px;line-height:19px;color:#fff;">40</span>
<span style="left:1572.0px;top:669.2px;font-size:14.5px;line-height:19px;color:#fff;">60</span>
<span style="left:1604.1px;top:690.7px;font-size:14.5px;line-height:19px;color:#fff;">80</span>
<span style="left:1632.3px;top:669.2px;font-size:14.5px;line-height:19px;color:#fff;">100</span>
<span style="left:1664.4px;top:690.7px;font-size:14.5px;line-height:19px;color:#fff;">120</span>
<span style="left:1696.6px;top:669.2px;font-size:14.5px;line-height:19px;color:#fff;">140</span>
<span style="left:1728.7px;top:690.7px;font-size:14.5px;line-height:19px;color:#fff;">160</span>
<span style="left:1760.9px;top:669.2px;font-size:14.5px;line-height:19px;color:#fff;">180</span>
<span style="left:1793.0px;top:690.7px;font-size:14.5px;line-height:19px;color:#fff;">200</span>
<span style="left:1825.2px;top:669.2px;font-size:14.5px;line-height:19px;color:#fff;">220</span>
<span style="left:1495.0px;top:713.2px;font-size:20px;line-height:26px;color:#fff;letter-spacing:0.01px;">Distance Difference (km)</span>
<span style="left:1278px;top:590px;font-size:20px;line-height:24px;color:#fff;transform:translate(-50%,-50%) rotate(-90deg);">Magnitude (dB)</span>
<div style="left:993px;top:748px;width:870px;height:7px;background:#808080;"></div>
<div style="left:993px;top:755px;width:870px;height:30px;background:#0e3055;"></div>
<div style="left:993px;top:785px;width:870px;height:197px;background:#000;"></div>
<span style="left:1390.5px;top:754.6px;font-size:22px;line-height:29px;color:#fff;letter-spacing:-0.33px;">TII Carriers</span>
<svg style="left:1842px;top:761.5px" width="19" height="16" viewBox="0 0 19 16"><path d="M1 1 L18 1 L9.5 15 Z" fill="none" stroke="#d8e4f0" stroke-width="1.3"/></svg>
<svg style="left:0;top:785px" width="1863" height="197" viewBox="0 785 1863 197"><defs><linearGradient id="gg" x1="0" y1="0" x2="0" y2="1"><stop offset="0" stop-color="#7cc79a"/><stop offset="1" stop-color="#d4ecd0"/></linearGradient></defs><line x1="1107.5" y1="806.5" x2="1838" y2="806.5" stroke="#8c8c8c" stroke-width="1"/><line x1="1107.5" y1="840.5" x2="1838" y2="840.5" stroke="#8c8c8c" stroke-width="1"/><line x1="1107.5" y1="873.5" x2="1838" y2="873.5" stroke="#8c8c8c" stroke-width="1"/><line x1="1107.5" y1="907.5" x2="1838" y2="907.5" stroke="#8c8c8c" stroke-width="1"/><line x1="1107.5" y1="940.5" x2="1838" y2="940.5" stroke="#8c8c8c" stroke-width="1"/><line x1="1107.5" y1="973.5" x2="1838" y2="973.5" stroke="#8c8c8c" stroke-width="1"/><line x1="1152.5" y1="806.5" x2="1152.5" y2="973.5" stroke="#8c8c8c" stroke-width="1"/><line x1="1223.5" y1="806.5" x2="1223.5" y2="973.5" stroke="#8c8c8c" stroke-width="1"/><line x1="1295.5" y1="806.5" x2="1295.5" y2="973.5" stroke="#8c8c8c" stroke-width="1"/><line x1="1366.5" y1="806.5" x2="1366.5" y2="973.5" stroke="#8c8c8c" stroke-width="1"/><line x1="1437.5" y1="806.5" x2="1437.5" y2="973.5" stroke="#8c8c8c" stroke-width="1"/><line x1="1509.5" y1="806.5" x2="1509.5" y2="973.5" stroke="#8c8c8c" stroke-width="1"/><line x1="1580.5" y1="806.5" x2="1580.5" y2="973.5" stroke="#8c8c8c" stroke-width="1"/><line x1="1651.5" y1="806.5" x2="1651.5" y2="973.5" stroke="#8c8c8c" stroke-width="1"/><line x1="1723.5" y1="806.5" x2="1723.5" y2="973.5" stroke="#8c8c8c" stroke-width="1"/><line x1="1794.5" y1="806.5" x2="1794.5" y2="973.5" stroke="#8c8c8c" stroke-width="1"/><rect x="1107.5" y="806.5" width="730.5" height="167.0" fill="none" stroke="#9a9a9a" stroke-width="1.6"/><line x1="1199.4" y1="808.5" x2="1199.4" y2="973.5" stroke="#e6e020" stroke-width="2" stroke-dasharray="2,1.9"/><line x1="1336.3" y1="808.5" x2="1336.3" y2="973.5" stroke="#e6e020" stroke-width="2" stroke-dasharray="2,1.9"/><line x1="1473.3" y1="808.5" x2="1473.3" y2="973.5" stroke="#e6e020" stroke-width="2" stroke-dasharray="2,1.9"/><line x1="1610.4" y1="808.5" x2="1610.4" y2="973.5" stroke="#e6e020" stroke-width="2" stroke-dasharray="2,1.9"/><line x1="1747.5" y1="808.5" x2="1747.5" y2="973.5" stroke="#e6e020" stroke-width="2" stroke-dasharray="2,1.9"/><line x1="1107.5" y1="972.5" x2="1838" y2="972.5" stroke="#a8a8a8" stroke-width="1.6"/><rect x="1221.1" y="956.5" width="3.2" height="17.0" fill="url(#gg)"/><line x1="1221.6" y1="855.5" x2="1221.6" y2="973.5" stroke="#ececec" stroke-width="1.5"/><rect x="1218.1" y="969.5" width="1.6" height="4" fill="#e6e020"/><rect x="1272.4" y="954.5" width="3.2" height="19.0" fill="url(#gg)"/><line x1="1272.9" y1="923.8" x2="1272.9" y2="973.5" stroke="#ececec" stroke-width="1.5"/><rect x="1289.4" y="954.5" width="3.2" height="19.0" fill="url(#gg)"/><line x1="1289.9" y1="927.1" x2="1289.9" y2="973.5" stroke="#ececec" stroke-width="1.5"/><rect x="1286.4" y="969.5" width="1.6" height="4" fill="#e6e020"/><rect x="1306.8" y="954.5" width="3.2" height="19.0" fill="url(#gg)"/><line x1="1307.3" y1="894.1" x2="1307.3" y2="973.5" stroke="#ececec" stroke-width="1.5"/><rect x="1303.8" y="969.5" width="1.6" height="4" fill="#e6e020"/><rect x="1357.7" y="958.5" width="3.2" height="15.0" fill="url(#gg)"/><line x1="1358.2" y1="938.9" x2="1358.2" y2="973.5" stroke="#ececec" stroke-width="1.5"/><rect x="1354.7" y="969.5" width="1.6" height="4" fill="#e6e020"/><rect x="1443.5" y="967.0" width="3.2" height="6.5" fill="url(#gg)"/><line x1="1444.0" y1="954.4" x2="1444.0" y2="973.5" stroke="#ececec" stroke-width="1.5"/><rect x="1440.5" y="969.5" width="1.6" height="4" fill="#e6e020"/><rect x="1495.3" y="969.5" width="3.2" height="4.0" fill="url(#gg)"/><line x1="1495.8" y1="934.6" x2="1495.8" y2="973.5" stroke="#ececec" stroke-width="1.5"/><rect x="1492.3" y="969.5" width="1.6" height="4" fill="#e6e020"/><rect x="1546.7" y="967.5" width="3.2" height="6.0" fill="url(#gg)"/><line x1="1547.2" y1="890.8" x2="1547.2" y2="973.5" stroke="#ececec" stroke-width="1.5"/><rect x="1543.7" y="969.5" width="1.6" height="4" fill="#e6e020"/><rect x="1563.7" y="965.5" width="3.2" height="8.0" fill="url(#gg)"/><line x1="1564.2" y1="882.3" x2="1564.2" y2="973.5" stroke="#ececec" stroke-width="1.5"/><rect x="1560.7" y="969.5" width="1.6" height="4" fill="#e6e020"/><rect x="1580.6" y="965.5" width="3.2" height="8.0" fill="url(#gg)"/><line x1="1581.1" y1="842.7" x2="1581.1" y2="973.5" stroke="#ececec" stroke-width="1.5"/><rect x="1632.5" y="965.5" width="3.2" height="8.0" fill="url(#gg)"/><line x1="1633.0" y1="806.5" x2="1633.0" y2="973.5" stroke="#ececec" stroke-width="1.5"/><rect x="1683.4" y="964.5" width="3.2" height="9.0" fill="url(#gg)"/><line x1="1683.9" y1="806.5" x2="1683.9" y2="973.5" stroke="#ececec" stroke-width="1.5"/><rect x="1700.3" y="964.5" width="3.2" height="9.0" fill="url(#gg)"/><line x1="1700.8" y1="806.5" x2="1700.8" y2="973.5" stroke="#ececec" stroke-width="1.5"/><rect x="1717.8" y="963.5" width="3.2" height="10.0" fill="url(#gg)"/><line x1="1718.3" y1="825.8" x2="1718.3" y2="973.5" stroke="#ececec" stroke-width="1.5"/><rect x="1405.9" y="965.5" width="1.8" height="8" fill="#e6e020"/><rect x="1410.1" y="961.5" width="1.8" height="12" fill="#9fd89f"/><rect x="1423.3" y="964.5" width="1.8" height="9" fill="#e6e020"/><rect x="1427.1" y="961.5" width="1.8" height="12" fill="#9fd89f"/><rect x="1439.8" y="965.5" width="1.8" height="8" fill="#e6e020"/><rect x="1492.1" y="969.5" width="1.8" height="4" fill="#e6e020"/></svg>
<span style="left:1068.1px;top:794.2px;font-size:19px;line-height:25px;color:#fff;">1.0</span>
<span style="left:1068.1px;top:828.2px;font-size:19px;line-height:25px;color:#fff;">0.8</span>
<span style="left:1068.1px;top:861.2px;font-size:19px;line-height:25px;color:#fff;">0.6</span>
<span style="left:1068.1px;top:895.2px;font-size:19px;line-height:25px;color:#fff;">0.4</span>
<span style="left:1068.1px;top:928.2px;font-size:19px;line-height:25px;color:#fff;">0.2</span>
<span style="left:1068.1px;top:961.2px;font-size:19px;line-height:25px;color:#fff;">0.0</span>
<span style="left:1039px;top:890px;font-size:20px;line-height:24px;color:#fff;transform:translate(-50%,-50%) rotate(-90deg);">Magnitude</span>
<svg style="left:1560px;top:0" width="303" height="41" viewBox="1560 0 303 41"><rect x="1576" y="8.2" width="28.4" height="21" fill="none" stroke="#fff" stroke-width="1.8"/><line x1="1576" y1="14.6" x2="1604.4" y2="14.6" stroke="#fff" stroke-width="1.8"/><rect x="1592.5" y="10.3" width="2.2" height="2" fill="#fff"/><rect x="1596.3" y="10.3" width="2.2" height="2" fill="#fff"/><rect x="1600.1" y="10.3" width="2.2" height="2" fill="#fff"/><circle cx="1657.5" cy="8.2" r="3.2" fill="none" stroke="#fff" stroke-width="1.5"/><path d="M1653 15.2 L1660.3 15.2 L1660.3 28.2 L1664.3 28.2 L1664.3 32.8 L1652.6 32.8 L1652.6 28.2 L1656.3 28.2 L1656.3 19.2 L1653 19.2 Z" fill="none" stroke="#fff" stroke-width="1.5" stroke-linejoin="round"/><path d="M1725.3 8.8 L1725.5 4.7 L1730.1 4.7 L1730.3 8.8 L1733.0 9.9 L1736.1 7.2 L1739.3 10.4 L1736.6 13.5 L1737.7 16.2 L1741.8 16.4 L1741.8 21.0 L1737.7 21.2 L1736.6 23.9 L1739.3 27.0 L1736.1 30.2 L1733.0 27.5 L1730.3 28.6 L1730.1 32.7 L1725.5 32.7 L1725.3 28.6 L1722.6 27.5 L1719.5 30.2 L1716.3 27.0 L1719.0 23.9 L1717.9 21.2 L1713.8 21.0 L1713.8 16.4 L1717.9 16.2 L1719.0 13.5 L1716.3 10.4 L1719.5 7.2 L1722.6 9.9 Z" fill="none" stroke="#fff" stroke-width="1.9" stroke-linejoin="round"/><circle cx="1727.8" cy="18.7" r="4.3" fill="none" stroke="#fff" stroke-width="1.9"/><path d="M1782 4.5 L1810.5 18.7 L1782 33 Z" fill="#1f6fb8"/><path d="M1821 4.5 L1850.5 18.7 L1821 33 Z" fill="#4f7d4f"/><circle cx="1865" cy="6" r="5.5" fill="#e2601e"/><circle cx="1865" cy="28.6" r="5.5" fill="#e2601e"/></svg>
</div></body></html>
